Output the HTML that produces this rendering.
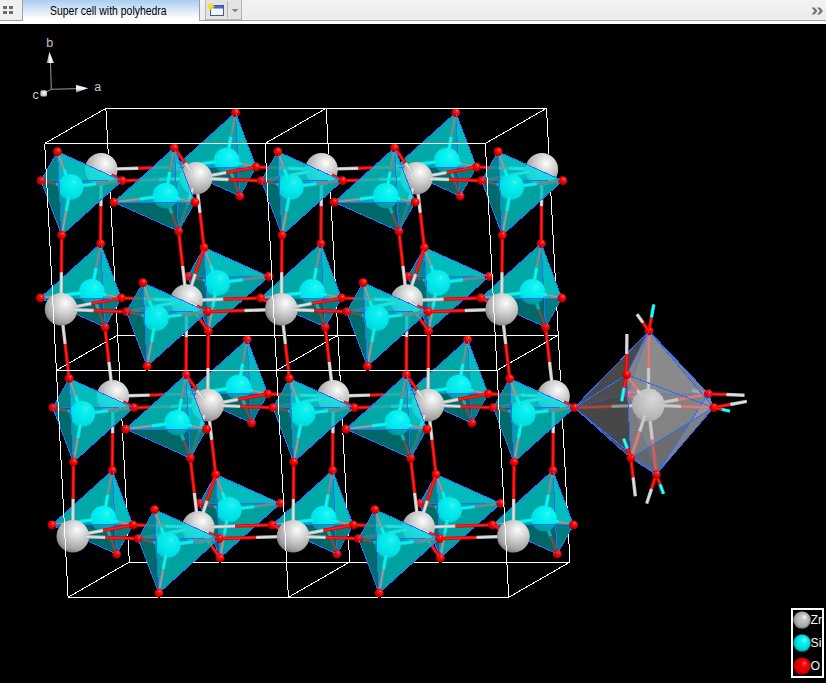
<!DOCTYPE html>
<html><head><meta charset="utf-8"><title>Super cell with polyhedra</title>
<style>
html,body{margin:0;padding:0;background:#000;overflow:hidden}
body{width:826px;height:683px;position:relative;font-family:"Liberation Sans",sans-serif}
#bar{position:absolute;left:0;top:0;width:826px;height:24px;background:linear-gradient(#f3f3f3,#ececec 19px,#fff 21px)}
#bar .line{position:absolute;left:0;top:20px;width:826px;height:1px;background:#a0a0a0}
#bar .wl{position:absolute;left:0;top:21px;width:826px;height:3px;background:#fff}
#b1{position:absolute;left:0;top:0;width:22px;height:20px;background:#f0f0f0;border-right:1px solid #a0a0a0}
#b1 i{position:absolute;width:4px;height:3px;background:#6e6e6e}
#tab{position:absolute;left:23px;top:0;width:176px;height:24px;background:linear-gradient(#a9cdf0,#cfe3f7 8px,#fff 19px)}
#tab span{position:absolute;left:27px;top:4px;font-size:12px;color:#000;white-space:nowrap;transform:scaleX(0.87);transform-origin:0 0}
#tabr{position:absolute;left:199px;top:0;width:1px;height:20px;background:#a0a0a0}
#grp{position:absolute;left:205px;top:0;width:37px;height:20px;background:#e3e3e3;border:1px solid #b4b4b4;border-top:none;box-sizing:border-box}
#grp .sep{position:absolute;left:21px;top:1px;width:1px;height:17px;background:#b4b4b4}
#more{position:absolute;left:811px;top:4.5px}
#cv{position:absolute;left:0;top:24px;width:826px;height:659px;background:#000}
svg text{font-family:"Liberation Sans",sans-serif}
</style></head><body>
<div id="cv"></div>
<svg width="826" height="683" viewBox="0 0 826 683" style="position:absolute;left:0;top:0">
<defs>
<radialGradient id="gZ" cx="0.63" cy="0.31" r="0.74"><stop offset="0" stop-color="#fff"/><stop offset="0.1" stop-color="#f2f2f2"/><stop offset="0.45" stop-color="#cdcdcd"/><stop offset="0.8" stop-color="#a4a4a4"/><stop offset="1" stop-color="#7a7a7a"/></radialGradient>
<radialGradient id="gS" cx="0.63" cy="0.31" r="0.74"><stop offset="0" stop-color="#c8ffff"/><stop offset="0.12" stop-color="#40ffff"/><stop offset="0.45" stop-color="#00f4fa"/><stop offset="0.8" stop-color="#00d4dc"/><stop offset="1" stop-color="#00a8b0"/></radialGradient>
<radialGradient id="gO" cx="0.63" cy="0.31" r="0.74"><stop offset="0" stop-color="#ffb0b0"/><stop offset="0.15" stop-color="#ff2020"/><stop offset="0.5" stop-color="#f00000"/><stop offset="1" stop-color="#a00000"/></radialGradient>
<linearGradient id="gA" x1="0" x2="1" y1="0" y2="0"><stop offset="0" stop-color="#8c8c8c"/><stop offset="0.5" stop-color="#fff"/><stop offset="1" stop-color="#c8c8c8"/></linearGradient>
<linearGradient id="gB" x1="0" x2="0" y1="0" y2="1"><stop offset="0" stop-color="#c8c8c8"/><stop offset="0.45" stop-color="#fff"/><stop offset="1" stop-color="#8c8c8c"/></linearGradient>
<radialGradient id="gC" cx="0.5" cy="0.5" r="0.6" fx="0.6" fy="0.35"><stop offset="0" stop-color="#fff"/><stop offset="1" stop-color="#b0b0b0"/></radialGradient>
<radialGradient id="lZ" cx="0.5" cy="0.5" r="0.5" fx="0.68" fy="0.3"><stop offset="0" stop-color="#f6f6f6"/><stop offset="0.35" stop-color="#c6c6c6"/><stop offset="0.8" stop-color="#a8a8a8"/><stop offset="1" stop-color="#707070"/></radialGradient>
<radialGradient id="lS" cx="0.5" cy="0.5" r="0.5" fx="0.68" fy="0.3"><stop offset="0" stop-color="#a0ffff"/><stop offset="0.35" stop-color="#00f4f4"/><stop offset="0.8" stop-color="#00d8d8"/><stop offset="1" stop-color="#009090"/></radialGradient>
<radialGradient id="lO" cx="0.5" cy="0.5" r="0.5" fx="0.68" fy="0.3"><stop offset="0" stop-color="#ff6060"/><stop offset="0.35" stop-color="#f40000"/><stop offset="0.8" stop-color="#d80000"/><stop offset="1" stop-color="#8c0000"/></radialGradient>
<clipPath id="cp"><rect x="0" y="24" width="826" height="659"/></clipPath>
</defs>
<g clip-path="url(#cp)" stroke-width="3.4" stroke-linecap="butt" fill="none">
<polygon points="251.5,422.9 247.2,339.5 186.8,393.9" fill="rgb(0,112,112)" fill-opacity="0.6"/>
<polygon points="251.5,422.9 247.2,339.5 267.8,393.9" fill="rgb(0,202,202)" fill-opacity="0.6"/>
<path d="M238.3 387.5L244.9 405.2" stroke="#00e6ee"/><path d="M238.3 387.5L244.9 405.2" stroke="#30ffff" stroke-width="1.5"/>
<path d="M244.9 405.2L251.5 422.9" stroke="#e80000" stroke-width="3.0"/><path d="M244.9 405.2L251.5 422.9" stroke="#ff2020" stroke-width="1.1"/>
<path d="M238.3 387.5L242.7 363.5" stroke="#00e6ee"/><path d="M238.3 387.5L242.7 363.5" stroke="#30ffff" stroke-width="1.5"/>
<path d="M242.7 363.5L247.2 339.5" stroke="#e80000" stroke-width="3.0"/><path d="M242.7 363.5L247.2 339.5" stroke="#ff2020" stroke-width="1.1"/>
<circle cx="238.3" cy="387.5" r="12.8" fill="url(#gS)"/>
<path d="M227.6 388.8L212.6 390.7" stroke="#00e6ee"/><path d="M227.6 388.8L212.6 390.7" stroke="#30ffff" stroke-width="1.5"/>
<path d="M244.5 388.8L253.1 390.7" stroke="#00e6ee"/><path d="M244.5 388.8L253.1 390.7" stroke="#30ffff" stroke-width="1.5"/>
<polygon points="247.2,339.5 267.8,393.9 186.8,393.9" fill="rgb(0,237,237)" fill-opacity="0.6"/>
<polygon points="251.5,422.9 267.8,393.9 186.8,393.9" fill="rgb(0,130,130)" fill-opacity="0.6"/>
<path d="M212.6 390.7L186.8 393.9" stroke="#8e8888" stroke-width="2.8"/><path d="M212.6 390.7L186.8 393.9" stroke="#7cb0b0" stroke-width="1.1"/>
<path d="M253.1 390.7L267.8 393.9" stroke="#8e8888" stroke-width="2.8"/><path d="M253.1 390.7L267.8 393.9" stroke="#7cb0b0" stroke-width="1.1"/>
<circle cx="251.5" cy="422.9" r="4.4" fill="url(#gO)"/>
<circle cx="247.2" cy="339.5" r="4.4" fill="url(#gO)"/>
<circle cx="112.9" cy="396.3" r="16.3" fill="url(#gZ)"/>
<path d="M112.8 411.3L112.6 433.4" stroke="#bdbdbd"/><path d="M112.8 411.3L112.6 433.4" stroke="#e4e4e4" stroke-width="1.5"/>
<path d="M112.6 433.4L112.3 470.5" stroke="#e80000"/><path d="M112.6 433.4L112.3 470.5" stroke="#ff2020" stroke-width="1.5"/>
<path d="M127.8 395.8L149.8 395.1" stroke="#bdbdbd"/><path d="M127.8 395.8L149.8 395.1" stroke="#e4e4e4" stroke-width="1.5"/>
<path d="M149.8 395.1L186.8 393.9" stroke="#e80000"/><path d="M149.8 395.1L186.8 393.9" stroke="#ff2020" stroke-width="1.5"/>
<path d="M111.3 382.3L108.9 361.7" stroke="#bdbdbd"/><path d="M111.3 382.3L108.9 361.7" stroke="#e4e4e4" stroke-width="1.5"/>
<circle cx="186.8" cy="393.9" r="4.4" fill="url(#gO)"/>
<polygon points="220,557.8 280.4,503.4 199.4,503.4" fill="rgb(0,103,103)" fill-opacity="0.6"/>
<polygon points="215.7,474.4 280.4,503.4 199.4,503.4" fill="rgb(0,211,211)" fill-opacity="0.6"/>
<path d="M228.9 509.8L254.6 506.6" stroke="#00e6ee"/><path d="M228.9 509.8L254.6 506.6" stroke="#30ffff" stroke-width="1.5"/>
<path d="M254.6 506.6L280.4 503.4" stroke="#e80000" stroke-width="3.0"/><path d="M254.6 506.6L280.4 503.4" stroke="#ff2020" stroke-width="1.1"/>
<path d="M228.9 509.8L214.1 506.6" stroke="#00e6ee"/><path d="M228.9 509.8L214.1 506.6" stroke="#30ffff" stroke-width="1.5"/>
<path d="M214.1 506.6L199.4 503.4" stroke="#e80000" stroke-width="3.0"/><path d="M214.1 506.6L199.4 503.4" stroke="#ff2020" stroke-width="1.1"/>
<circle cx="228.9" cy="509.8" r="12.8" fill="url(#gS)"/>
<path d="M227 519.8L224.5 533.8" stroke="#00e6ee"/><path d="M227 519.8L224.5 533.8" stroke="#30ffff" stroke-width="1.5"/>
<path d="M226.1 502.4L222.3 492.1" stroke="#00e6ee"/><path d="M226.1 502.4L222.3 492.1" stroke="#30ffff" stroke-width="1.5"/>
<polygon points="215.7,474.4 220,557.8 199.4,503.4" fill="rgb(0,139,139)" fill-opacity="0.6"/>
<polygon points="215.7,474.4 220,557.8 280.4,503.4" fill="rgb(0,229,229)" fill-opacity="0.6"/>
<path d="M224.5 533.8L220 557.8" stroke="#8e8888" stroke-width="2.8"/><path d="M224.5 533.8L220 557.8" stroke="#7cb0b0" stroke-width="1.1"/>
<path d="M222.3 492.1L215.7 474.4" stroke="#8e8888" stroke-width="2.8"/><path d="M222.3 492.1L215.7 474.4" stroke="#7cb0b0" stroke-width="1.1"/>
<circle cx="199.4" cy="503.4" r="4.4" fill="url(#gO)"/>
<circle cx="280.4" cy="503.4" r="4.4" fill="url(#gO)"/>
<path d="M108.9 361.7L104.9 327.1" stroke="#e80000"/><path d="M108.9 361.7L104.9 327.1" stroke="#ff2020" stroke-width="1.5"/>
<polygon points="239.8,196 235.5,112.6 175.1,167" fill="rgb(0,112,112)" fill-opacity="0.6"/>
<polygon points="239.8,196 235.5,112.6 256.1,167" fill="rgb(0,202,202)" fill-opacity="0.6"/>
<path d="M226.6 160.6L233.2 178.3" stroke="#00e6ee"/><path d="M226.6 160.6L233.2 178.3" stroke="#30ffff" stroke-width="1.5"/>
<path d="M233.2 178.3L239.8 196" stroke="#e80000" stroke-width="3.0"/><path d="M233.2 178.3L239.8 196" stroke="#ff2020" stroke-width="1.1"/>
<path d="M226.6 160.6L231 136.6" stroke="#00e6ee"/><path d="M226.6 160.6L231 136.6" stroke="#30ffff" stroke-width="1.5"/>
<path d="M231 136.6L235.5 112.6" stroke="#e80000" stroke-width="3.0"/><path d="M231 136.6L235.5 112.6" stroke="#ff2020" stroke-width="1.1"/>
<circle cx="226.6" cy="160.6" r="12.8" fill="url(#gS)"/>
<path d="M215.9 161.9L200.9 163.8" stroke="#00e6ee"/><path d="M215.9 161.9L200.9 163.8" stroke="#30ffff" stroke-width="1.5"/>
<path d="M232.8 161.9L241.4 163.8" stroke="#00e6ee"/><path d="M232.8 161.9L241.4 163.8" stroke="#30ffff" stroke-width="1.5"/>
<polygon points="235.5,112.6 256.1,167 175.1,167" fill="rgb(0,237,237)" fill-opacity="0.6"/>
<polygon points="239.8,196 256.1,167 175.1,167" fill="rgb(0,130,130)" fill-opacity="0.6"/>
<path d="M200.9 163.8L175.1 167" stroke="#8e8888" stroke-width="2.8"/><path d="M200.9 163.8L175.1 167" stroke="#7cb0b0" stroke-width="1.1"/>
<path d="M241.4 163.8L256.1 167" stroke="#8e8888" stroke-width="2.8"/><path d="M241.4 163.8L256.1 167" stroke="#7cb0b0" stroke-width="1.1"/>
<circle cx="239.8" cy="196" r="4.4" fill="url(#gO)"/>
<circle cx="235.5" cy="112.6" r="4.4" fill="url(#gO)"/>
<path d="M116.9 398.5L123.3 402" stroke="#bdbdbd"/><path d="M116.9 398.5L123.3 402" stroke="#e4e4e4" stroke-width="1.5"/>
<path d="M197.3 399.5L187.9 394.4" stroke="#e80000"/><path d="M197.3 399.5L187.9 394.4" stroke="#ff2020" stroke-width="1.5"/>
<polygon points="116.6,554 112.3,470.5 51.9,524.9" fill="rgb(0,112,112)" fill-opacity="0.6"/>
<polygon points="116.6,554 112.3,470.5 132.9,524.9" fill="rgb(0,202,202)" fill-opacity="0.6"/>
<path d="M103.4 518.6L110 536.3" stroke="#00e6ee"/><path d="M103.4 518.6L110 536.3" stroke="#30ffff" stroke-width="1.5"/>
<path d="M110 536.3L116.6 554" stroke="#e80000" stroke-width="3.0"/><path d="M110 536.3L116.6 554" stroke="#ff2020" stroke-width="1.1"/>
<path d="M103.4 518.6L107.8 494.5" stroke="#00e6ee"/><path d="M103.4 518.6L107.8 494.5" stroke="#30ffff" stroke-width="1.5"/>
<path d="M107.8 494.5L112.3 470.5" stroke="#e80000" stroke-width="3.0"/><path d="M107.8 494.5L112.3 470.5" stroke="#ff2020" stroke-width="1.1"/>
<circle cx="103.4" cy="518.6" r="12.8" fill="url(#gS)"/>
<path d="M92.7 519.9L77.7 521.7" stroke="#00e6ee"/><path d="M92.7 519.9L77.7 521.7" stroke="#30ffff" stroke-width="1.5"/>
<path d="M109.6 519.9L118.2 521.7" stroke="#00e6ee"/><path d="M109.6 519.9L118.2 521.7" stroke="#30ffff" stroke-width="1.5"/>
<polygon points="112.3,470.5 132.9,524.9 51.9,524.9" fill="rgb(0,237,237)" fill-opacity="0.6"/>
<polygon points="116.6,554 132.9,524.9 51.9,524.9" fill="rgb(0,130,130)" fill-opacity="0.6"/>
<path d="M77.7 521.7L51.9 524.9" stroke="#8e8888" stroke-width="2.8"/><path d="M77.7 521.7L51.9 524.9" stroke="#7cb0b0" stroke-width="1.1"/>
<path d="M118.2 521.7L132.9 524.9" stroke="#8e8888" stroke-width="2.8"/><path d="M118.2 521.7L132.9 524.9" stroke="#7cb0b0" stroke-width="1.1"/>
<circle cx="116.6" cy="554" r="4.4" fill="url(#gO)"/>
<circle cx="112.3" cy="470.5" r="4.4" fill="url(#gO)"/>
<circle cx="101.2" cy="169.4" r="16.3" fill="url(#gZ)"/>
<path d="M101.1 184.4L100.9 206.5" stroke="#bdbdbd"/><path d="M101.1 184.4L100.9 206.5" stroke="#e4e4e4" stroke-width="1.5"/>
<circle cx="267.8" cy="393.9" r="4.4" fill="url(#gO)"/>
<path d="M100.9 206.5L100.6 243.6" stroke="#e80000"/><path d="M100.9 206.5L100.6 243.6" stroke="#ff2020" stroke-width="1.5"/>
<path d="M116.1 168.9L138.1 168.2" stroke="#bdbdbd"/><path d="M116.1 168.9L138.1 168.2" stroke="#e4e4e4" stroke-width="1.5"/>
<path d="M138.1 168.2L175.1 167" stroke="#e80000"/><path d="M138.1 168.2L175.1 167" stroke="#ff2020" stroke-width="1.5"/>
<path d="M300.5 395.1L271.4 394" stroke="#e80000"/><path d="M300.5 395.1L271.4 394" stroke="#ff2020" stroke-width="1.5"/>
<path d="M237.8 399.5L264.8 394.4" stroke="#e80000"/><path d="M237.8 399.5L264.8 394.4" stroke="#ff2020" stroke-width="1.5"/>
<circle cx="220" cy="557.8" r="4.4" fill="url(#gO)"/>
<circle cx="175.1" cy="167" r="4.4" fill="url(#gO)"/>
<polygon points="208.3,330.9 268.7,276.5 187.7,276.5" fill="rgb(0,103,103)" fill-opacity="0.6"/>
<polygon points="204,247.5 268.7,276.5 187.7,276.5" fill="rgb(0,211,211)" fill-opacity="0.6"/>
<path d="M217.2 282.9L242.9 279.7" stroke="#00e6ee"/><path d="M217.2 282.9L242.9 279.7" stroke="#30ffff" stroke-width="1.5"/>
<path d="M242.9 279.7L268.7 276.5" stroke="#e80000" stroke-width="3.0"/><path d="M242.9 279.7L268.7 276.5" stroke="#ff2020" stroke-width="1.1"/>
<path d="M217.2 282.9L202.4 279.7" stroke="#00e6ee"/><path d="M217.2 282.9L202.4 279.7" stroke="#30ffff" stroke-width="1.5"/>
<path d="M202.4 279.7L187.7 276.5" stroke="#e80000" stroke-width="3.0"/><path d="M202.4 279.7L187.7 276.5" stroke="#ff2020" stroke-width="1.1"/>
<circle cx="217.2" cy="282.9" r="12.8" fill="url(#gS)"/>
<path d="M215.3 292.9L212.8 306.9" stroke="#00e6ee"/><path d="M215.3 292.9L212.8 306.9" stroke="#30ffff" stroke-width="1.5"/>
<path d="M214.4 275.5L210.6 265.2" stroke="#00e6ee"/><path d="M214.4 275.5L210.6 265.2" stroke="#30ffff" stroke-width="1.5"/>
<polygon points="204,247.5 208.3,330.9 187.7,276.5" fill="rgb(0,139,139)" fill-opacity="0.6"/>
<polygon points="204,247.5 208.3,330.9 268.7,276.5" fill="rgb(0,229,229)" fill-opacity="0.6"/>
<path d="M212.8 306.9L208.3 330.9" stroke="#8e8888" stroke-width="2.8"/><path d="M212.8 306.9L208.3 330.9" stroke="#7cb0b0" stroke-width="1.1"/>
<path d="M210.6 265.2L204 247.5" stroke="#8e8888" stroke-width="2.8"/><path d="M210.6 265.2L204 247.5" stroke="#7cb0b0" stroke-width="1.1"/>
<circle cx="187.7" cy="276.5" r="4.4" fill="url(#gO)"/>
<circle cx="268.7" cy="276.5" r="4.4" fill="url(#gO)"/>
<polygon points="471.8,422.9 467.5,339.5 407.1,393.9" fill="rgb(0,112,112)" fill-opacity="0.6"/>
<polygon points="471.8,422.9 467.5,339.5 488.1,393.9" fill="rgb(0,202,202)" fill-opacity="0.6"/>
<path d="M458.6 387.5L465.2 405.2" stroke="#00e6ee"/><path d="M458.6 387.5L465.2 405.2" stroke="#30ffff" stroke-width="1.5"/>
<path d="M465.2 405.2L471.8 422.9" stroke="#e80000" stroke-width="3.0"/><path d="M465.2 405.2L471.8 422.9" stroke="#ff2020" stroke-width="1.1"/>
<path d="M458.6 387.5L463 363.5" stroke="#00e6ee"/><path d="M458.6 387.5L463 363.5" stroke="#30ffff" stroke-width="1.5"/>
<path d="M463 363.5L467.5 339.5" stroke="#e80000" stroke-width="3.0"/><path d="M463 363.5L467.5 339.5" stroke="#ff2020" stroke-width="1.1"/>
<circle cx="458.6" cy="387.5" r="12.8" fill="url(#gS)"/>
<path d="M447.9 388.8L432.9 390.7" stroke="#00e6ee"/><path d="M447.9 388.8L432.9 390.7" stroke="#30ffff" stroke-width="1.5"/>
<path d="M464.8 388.8L473.4 390.7" stroke="#00e6ee"/><path d="M464.8 388.8L473.4 390.7" stroke="#30ffff" stroke-width="1.5"/>
<polygon points="467.5,339.5 488.1,393.9 407.1,393.9" fill="rgb(0,237,237)" fill-opacity="0.6"/>
<polygon points="471.8,422.9 488.1,393.9 407.1,393.9" fill="rgb(0,130,130)" fill-opacity="0.6"/>
<path d="M432.9 390.7L407.1 393.9" stroke="#8e8888" stroke-width="2.8"/><path d="M432.9 390.7L407.1 393.9" stroke="#7cb0b0" stroke-width="1.1"/>
<path d="M473.4 390.7L488.1 393.9" stroke="#8e8888" stroke-width="2.8"/><path d="M473.4 390.7L488.1 393.9" stroke="#7cb0b0" stroke-width="1.1"/>
<circle cx="471.8" cy="422.9" r="4.4" fill="url(#gO)"/>
<circle cx="467.5" cy="339.5" r="4.4" fill="url(#gO)"/>
<path d="M123.3 402L133.8 407.6" stroke="#e80000"/><path d="M123.3 402L133.8 407.6" stroke="#ff2020" stroke-width="1.5"/>
<circle cx="51.9" cy="524.9" r="4.4" fill="url(#gO)"/>
<path d="M333.2 396.3L300.5 395.1" stroke="#bdbdbd"/><path d="M333.2 396.3L300.5 395.1" stroke="#e4e4e4" stroke-width="1.5"/>
<circle cx="215.7" cy="474.4" r="4.4" fill="url(#gO)"/>
<path d="M209.2 542.6L218.9 556.3" stroke="#e80000"/><path d="M209.2 542.6L218.9 556.3" stroke="#ff2020" stroke-width="1.5"/>
<path d="M105.2 171.6L111.6 175.1" stroke="#bdbdbd"/><path d="M105.2 171.6L111.6 175.1" stroke="#e4e4e4" stroke-width="1.5"/>
<path d="M207.7 405.1L197.3 399.5" stroke="#bdbdbd"/><path d="M207.7 405.1L197.3 399.5" stroke="#e4e4e4" stroke-width="1.5"/>
<path d="M211.7 439.7L215.3 470.6" stroke="#e80000"/><path d="M211.7 439.7L215.3 470.6" stroke="#ff2020" stroke-width="1.5"/>
<path d="M185.6 172.6L176.2 167.5" stroke="#e80000"/><path d="M185.6 172.6L176.2 167.5" stroke="#ff2020" stroke-width="1.5"/>
<polygon points="104.9,327.1 100.6,243.6 40.2,298" fill="rgb(0,112,112)" fill-opacity="0.6"/>
<polygon points="104.9,327.1 100.6,243.6 121.2,298" fill="rgb(0,202,202)" fill-opacity="0.6"/>
<path d="M91.7 291.7L98.3 309.4" stroke="#00e6ee"/><path d="M91.7 291.7L98.3 309.4" stroke="#30ffff" stroke-width="1.5"/>
<path d="M98.3 309.4L104.9 327.1" stroke="#e80000" stroke-width="3.0"/><path d="M98.3 309.4L104.9 327.1" stroke="#ff2020" stroke-width="1.1"/>
<path d="M91.7 291.7L96.1 267.6" stroke="#00e6ee"/><path d="M91.7 291.7L96.1 267.6" stroke="#30ffff" stroke-width="1.5"/>
<path d="M96.1 267.6L100.6 243.6" stroke="#e80000" stroke-width="3.0"/><path d="M96.1 267.6L100.6 243.6" stroke="#ff2020" stroke-width="1.1"/>
<circle cx="91.7" cy="291.7" r="12.8" fill="url(#gS)"/>
<path d="M81 293L66 294.8" stroke="#00e6ee"/><path d="M81 293L66 294.8" stroke="#30ffff" stroke-width="1.5"/>
<path d="M97.9 293L106.5 294.8" stroke="#00e6ee"/><path d="M97.9 293L106.5 294.8" stroke="#30ffff" stroke-width="1.5"/>
<polygon points="100.6,243.6 121.2,298 40.2,298" fill="rgb(0,237,237)" fill-opacity="0.6"/>
<polygon points="104.9,327.1 121.2,298 40.2,298" fill="rgb(0,130,130)" fill-opacity="0.6"/>
<path d="M66 294.8L40.2 298" stroke="#8e8888" stroke-width="2.8"/><path d="M66 294.8L40.2 298" stroke="#7cb0b0" stroke-width="1.1"/>
<path d="M106.5 294.8L121.2 298" stroke="#8e8888" stroke-width="2.8"/><path d="M106.5 294.8L121.2 298" stroke="#7cb0b0" stroke-width="1.1"/>
<circle cx="104.9" cy="327.1" r="4.4" fill="url(#gO)"/>
<circle cx="100.6" cy="243.6" r="4.4" fill="url(#gO)"/>
<circle cx="333.2" cy="396.3" r="16.3" fill="url(#gZ)"/>
<path d="M333.1 411.3L332.9 433.4" stroke="#bdbdbd"/><path d="M333.1 411.3L332.9 433.4" stroke="#e4e4e4" stroke-width="1.5"/>
<path d="M332.9 433.4L332.6 470.5" stroke="#e80000"/><path d="M332.9 433.4L332.6 470.5" stroke="#ff2020" stroke-width="1.5"/>
<path d="M207.7 405.1L237.8 399.5" stroke="#bdbdbd"/><path d="M207.7 405.1L237.8 399.5" stroke="#e4e4e4" stroke-width="1.5"/>
<path d="M348.1 395.8L370.1 395.1" stroke="#bdbdbd"/><path d="M348.1 395.8L370.1 395.1" stroke="#e4e4e4" stroke-width="1.5"/>
<path d="M207 500.9L214.8 477.1" stroke="#e80000"/><path d="M207 500.9L214.8 477.1" stroke="#ff2020" stroke-width="1.5"/>
<path d="M370.1 395.1L407.1 393.9" stroke="#e80000"/><path d="M370.1 395.1L407.1 393.9" stroke="#ff2020" stroke-width="1.5"/>
<circle cx="256.1" cy="167" r="4.4" fill="url(#gO)"/>
<path d="M207.7 405.1L211.7 439.7" stroke="#bdbdbd"/><path d="M207.7 405.1L211.7 439.7" stroke="#e4e4e4" stroke-width="1.5"/>
<path d="M170.8 406.4L137.8 407.5" stroke="#e80000"/><path d="M170.8 406.4L137.8 407.5" stroke="#ff2020" stroke-width="1.5"/>
<path d="M331.6 382.3L329.2 361.7" stroke="#bdbdbd"/><path d="M331.6 382.3L329.2 361.7" stroke="#e4e4e4" stroke-width="1.5"/>
<path d="M288.8 168.2L259.7 167.1" stroke="#e80000"/><path d="M288.8 168.2L259.7 167.1" stroke="#ff2020" stroke-width="1.5"/>
<path d="M207.7 405.1L170.8 406.4" stroke="#bdbdbd"/><path d="M207.7 405.1L170.8 406.4" stroke="#e4e4e4" stroke-width="1.5"/>
<circle cx="407.1" cy="393.9" r="4.4" fill="url(#gO)"/>
<path d="M208 368L208.3 335" stroke="#e80000"/><path d="M208 368L208.3 335" stroke="#ff2020" stroke-width="1.5"/>
<circle cx="132.9" cy="524.9" r="4.4" fill="url(#gO)"/>
<path d="M207.7 405.1L208 368" stroke="#bdbdbd"/><path d="M207.7 405.1L208 368" stroke="#e4e4e4" stroke-width="1.5"/>
<circle cx="207.7" cy="405.1" r="16.3" fill="url(#gZ)"/>
<polygon points="440.3,557.8 500.7,503.4 419.7,503.4" fill="rgb(0,103,103)" fill-opacity="0.6"/>
<polygon points="436,474.4 500.7,503.4 419.7,503.4" fill="rgb(0,211,211)" fill-opacity="0.6"/>
<path d="M226.1 172.6L253.1 167.5" stroke="#e80000"/><path d="M226.1 172.6L253.1 167.5" stroke="#ff2020" stroke-width="1.5"/>
<path d="M449.2 509.8L474.9 506.6" stroke="#00e6ee"/><path d="M449.2 509.8L474.9 506.6" stroke="#30ffff" stroke-width="1.5"/>
<path d="M474.9 506.6L500.7 503.4" stroke="#e80000" stroke-width="3.0"/><path d="M474.9 506.6L500.7 503.4" stroke="#ff2020" stroke-width="1.1"/>
<path d="M449.2 509.8L434.4 506.6" stroke="#00e6ee"/><path d="M449.2 509.8L434.4 506.6" stroke="#30ffff" stroke-width="1.5"/>
<path d="M434.4 506.6L419.7 503.4" stroke="#e80000" stroke-width="3.0"/><path d="M434.4 506.6L419.7 503.4" stroke="#ff2020" stroke-width="1.1"/>
<circle cx="449.2" cy="509.8" r="12.8" fill="url(#gS)"/>
<path d="M447.3 519.8L444.8 533.8" stroke="#00e6ee"/><path d="M447.3 519.8L444.8 533.8" stroke="#30ffff" stroke-width="1.5"/>
<path d="M446.4 502.4L442.6 492.1" stroke="#00e6ee"/><path d="M446.4 502.4L442.6 492.1" stroke="#30ffff" stroke-width="1.5"/>
<polygon points="436,474.4 440.3,557.8 419.7,503.4" fill="rgb(0,139,139)" fill-opacity="0.6"/>
<polygon points="436,474.4 440.3,557.8 500.7,503.4" fill="rgb(0,229,229)" fill-opacity="0.6"/>
<path d="M444.8 533.8L440.3 557.8" stroke="#8e8888" stroke-width="2.8"/><path d="M444.8 533.8L440.3 557.8" stroke="#7cb0b0" stroke-width="1.1"/>
<path d="M442.6 492.1L436 474.4" stroke="#8e8888" stroke-width="2.8"/><path d="M442.6 492.1L436 474.4" stroke="#7cb0b0" stroke-width="1.1"/>
<circle cx="208.3" cy="330.9" r="4.4" fill="url(#gO)"/>
<circle cx="419.7" cy="503.4" r="4.4" fill="url(#gO)"/>
<circle cx="500.7" cy="503.4" r="4.4" fill="url(#gO)"/>
<path d="M321.7 398.5L303.1 402" stroke="#bdbdbd"/><path d="M321.7 398.5L303.1 402" stroke="#e4e4e4" stroke-width="1.5"/>
<path d="M165.6 526.1L136.5 525" stroke="#e80000"/><path d="M165.6 526.1L136.5 525" stroke="#ff2020" stroke-width="1.5"/>
<path d="M329.2 361.7L325.2 327.1" stroke="#e80000"/><path d="M329.2 361.7L325.2 327.1" stroke="#ff2020" stroke-width="1.5"/>
<path d="M102.9 530.5L129.9 525.5" stroke="#e80000"/><path d="M102.9 530.5L129.9 525.5" stroke="#ff2020" stroke-width="1.5"/>
<polygon points="460.1,196 455.8,112.6 395.4,167" fill="rgb(0,112,112)" fill-opacity="0.6"/>
<polygon points="460.1,196 455.8,112.6 476.4,167" fill="rgb(0,202,202)" fill-opacity="0.6"/>
<path d="M446.9 160.6L453.5 178.3" stroke="#00e6ee"/><path d="M446.9 160.6L453.5 178.3" stroke="#30ffff" stroke-width="1.5"/>
<path d="M453.5 178.3L460.1 196" stroke="#e80000" stroke-width="3.0"/><path d="M453.5 178.3L460.1 196" stroke="#ff2020" stroke-width="1.1"/>
<path d="M446.9 160.6L451.3 136.6" stroke="#00e6ee"/><path d="M446.9 160.6L451.3 136.6" stroke="#30ffff" stroke-width="1.5"/>
<path d="M451.3 136.6L455.8 112.6" stroke="#e80000" stroke-width="3.0"/><path d="M451.3 136.6L455.8 112.6" stroke="#ff2020" stroke-width="1.1"/>
<circle cx="446.9" cy="160.6" r="12.8" fill="url(#gS)"/>
<path d="M436.2 161.9L421.2 163.8" stroke="#00e6ee"/><path d="M436.2 161.9L421.2 163.8" stroke="#30ffff" stroke-width="1.5"/>
<path d="M453.1 161.9L461.7 163.8" stroke="#00e6ee"/><path d="M453.1 161.9L461.7 163.8" stroke="#30ffff" stroke-width="1.5"/>
<polygon points="455.8,112.6 476.4,167 395.4,167" fill="rgb(0,237,237)" fill-opacity="0.6"/>
<polygon points="460.1,196 476.4,167 395.4,167" fill="rgb(0,130,130)" fill-opacity="0.6"/>
<path d="M421.2 163.8L395.4 167" stroke="#8e8888" stroke-width="2.8"/><path d="M421.2 163.8L395.4 167" stroke="#7cb0b0" stroke-width="1.1"/>
<path d="M461.7 163.8L476.4 167" stroke="#8e8888" stroke-width="2.8"/><path d="M461.7 163.8L476.4 167" stroke="#7cb0b0" stroke-width="1.1"/>
<circle cx="460.1" cy="196" r="4.4" fill="url(#gO)"/>
<circle cx="455.8" cy="112.6" r="4.4" fill="url(#gO)"/>
<path d="M111.6 175.1L122.1 180.7" stroke="#e80000"/><path d="M111.6 175.1L122.1 180.7" stroke="#ff2020" stroke-width="1.5"/>
<circle cx="40.2" cy="298" r="4.4" fill="url(#gO)"/>
<path d="M337.2 398.5L343.6 402" stroke="#bdbdbd"/><path d="M337.2 398.5L343.6 402" stroke="#e4e4e4" stroke-width="1.5"/>
<path d="M220.9 405.6L240.4 406.4" stroke="#bdbdbd"/><path d="M220.9 405.6L240.4 406.4" stroke="#e4e4e4" stroke-width="1.5"/>
<path d="M198.3 527.4L209.2 542.6" stroke="#bdbdbd"/><path d="M198.3 527.4L209.2 542.6" stroke="#e4e4e4" stroke-width="1.5"/>
<polygon points="73.4,462 133.8,407.6 52.8,407.6" fill="rgb(0,103,103)" fill-opacity="0.6"/>
<polygon points="69.1,378.5 133.8,407.6 52.8,407.6" fill="rgb(0,211,211)" fill-opacity="0.6"/>
<path d="M82.3 413.9L108 410.8" stroke="#00e6ee"/><path d="M82.3 413.9L108 410.8" stroke="#30ffff" stroke-width="1.5"/>
<path d="M108 410.8L133.8 407.6" stroke="#e80000" stroke-width="3.0"/><path d="M108 410.8L133.8 407.6" stroke="#ff2020" stroke-width="1.1"/>
<path d="M82.3 413.9L67.5 410.8" stroke="#00e6ee"/><path d="M82.3 413.9L67.5 410.8" stroke="#30ffff" stroke-width="1.5"/>
<path d="M67.5 410.8L52.8 407.6" stroke="#e80000" stroke-width="3.0"/><path d="M67.5 410.8L52.8 407.6" stroke="#ff2020" stroke-width="1.1"/>
<circle cx="82.3" cy="413.9" r="12.8" fill="url(#gS)"/>
<path d="M321.5 169.4L288.8 168.2" stroke="#bdbdbd"/><path d="M321.5 169.4L288.8 168.2" stroke="#e4e4e4" stroke-width="1.5"/>
<path d="M80.4 424L77.9 438" stroke="#00e6ee"/><path d="M80.4 424L77.9 438" stroke="#30ffff" stroke-width="1.5"/>
<path d="M79.5 406.5L75.7 396.2" stroke="#00e6ee"/><path d="M79.5 406.5L75.7 396.2" stroke="#30ffff" stroke-width="1.5"/>
<path d="M417.6 399.5L408.2 394.4" stroke="#e80000"/><path d="M417.6 399.5L408.2 394.4" stroke="#ff2020" stroke-width="1.5"/>
<polygon points="69.1,378.5 73.4,462 52.8,407.6" fill="rgb(0,139,139)" fill-opacity="0.6"/>
<polygon points="69.1,378.5 73.4,462 133.8,407.6" fill="rgb(0,229,229)" fill-opacity="0.6"/>
<path d="M77.9 438L73.4 462" stroke="#8e8888" stroke-width="2.8"/><path d="M77.9 438L73.4 462" stroke="#7cb0b0" stroke-width="1.1"/>
<path d="M75.7 396.2L69.1 378.5" stroke="#8e8888" stroke-width="2.8"/><path d="M75.7 396.2L69.1 378.5" stroke="#7cb0b0" stroke-width="1.1"/>
<circle cx="52.8" cy="407.6" r="4.4" fill="url(#gO)"/>
<circle cx="133.8" cy="407.6" r="4.4" fill="url(#gO)"/>
<polygon points="336.9,554 332.6,470.5 272.2,524.9" fill="rgb(0,112,112)" fill-opacity="0.6"/>
<polygon points="336.9,554 332.6,470.5 353.2,524.9" fill="rgb(0,202,202)" fill-opacity="0.6"/>
<path d="M323.7 518.6L330.3 536.3" stroke="#00e6ee"/><path d="M323.7 518.6L330.3 536.3" stroke="#30ffff" stroke-width="1.5"/>
<path d="M330.3 536.3L336.9 554" stroke="#e80000" stroke-width="3.0"/><path d="M330.3 536.3L336.9 554" stroke="#ff2020" stroke-width="1.1"/>
<path d="M323.7 518.6L328.1 494.5" stroke="#00e6ee"/><path d="M323.7 518.6L328.1 494.5" stroke="#30ffff" stroke-width="1.5"/>
<path d="M328.1 494.5L332.6 470.5" stroke="#e80000" stroke-width="3.0"/><path d="M328.1 494.5L332.6 470.5" stroke="#ff2020" stroke-width="1.1"/>
<circle cx="323.7" cy="518.6" r="12.8" fill="url(#gS)"/>
<circle cx="204" cy="247.5" r="4.4" fill="url(#gO)"/>
<path d="M198.3 527.4L207 500.9" stroke="#bdbdbd"/><path d="M198.3 527.4L207 500.9" stroke="#e4e4e4" stroke-width="1.5"/>
<path d="M313 519.9L298 521.7" stroke="#00e6ee"/><path d="M313 519.9L298 521.7" stroke="#30ffff" stroke-width="1.5"/>
<path d="M329.9 519.9L338.5 521.7" stroke="#00e6ee"/><path d="M329.9 519.9L338.5 521.7" stroke="#30ffff" stroke-width="1.5"/>
<polygon points="332.6,470.5 353.2,524.9 272.2,524.9" fill="rgb(0,237,237)" fill-opacity="0.6"/>
<polygon points="336.9,554 353.2,524.9 272.2,524.9" fill="rgb(0,130,130)" fill-opacity="0.6"/>
<path d="M298 521.7L272.2 524.9" stroke="#8e8888" stroke-width="2.8"/><path d="M298 521.7L272.2 524.9" stroke="#7cb0b0" stroke-width="1.1"/>
<path d="M338.5 521.7L353.2 524.9" stroke="#8e8888" stroke-width="2.8"/><path d="M338.5 521.7L353.2 524.9" stroke="#7cb0b0" stroke-width="1.1"/>
<circle cx="336.9" cy="554" r="4.4" fill="url(#gO)"/>
<circle cx="332.6" cy="470.5" r="4.4" fill="url(#gO)"/>
<path d="M197.5 315.7L207.2 329.4" stroke="#e80000"/><path d="M197.5 315.7L207.2 329.4" stroke="#ff2020" stroke-width="1.5"/>
<path d="M196 178.2L185.6 172.6" stroke="#bdbdbd"/><path d="M196 178.2L185.6 172.6" stroke="#e4e4e4" stroke-width="1.5"/>
<path d="M200 212.8L203.6 243.7" stroke="#e80000"/><path d="M200 212.8L203.6 243.7" stroke="#ff2020" stroke-width="1.5"/>
<path d="M204.4 415.2L199 431.6" stroke="#bdbdbd"/><path d="M204.4 415.2L199 431.6" stroke="#e4e4e4" stroke-width="1.5"/>
<path d="M198.3 527.4L165.6 526.1" stroke="#bdbdbd"/><path d="M198.3 527.4L165.6 526.1" stroke="#e4e4e4" stroke-width="1.5"/>
<circle cx="321.5" cy="169.4" r="16.3" fill="url(#gZ)"/>
<path d="M303.1 402L273.1 407.6" stroke="#e80000"/><path d="M303.1 402L273.1 407.6" stroke="#ff2020" stroke-width="1.5"/>
<path d="M321.4 184.4L321.2 206.5" stroke="#bdbdbd"/><path d="M321.4 184.4L321.2 206.5" stroke="#e4e4e4" stroke-width="1.5"/>
<circle cx="488.1" cy="393.9" r="4.4" fill="url(#gO)"/>
<path d="M203.6 399.3L196.8 389.9" stroke="#bdbdbd"/><path d="M203.6 399.3L196.8 389.9" stroke="#e4e4e4" stroke-width="1.5"/>
<path d="M321.2 206.5L320.9 243.6" stroke="#e80000"/><path d="M321.2 206.5L320.9 243.6" stroke="#ff2020" stroke-width="1.5"/>
<path d="M196 178.2L226.1 172.6" stroke="#bdbdbd"/><path d="M196 178.2L226.1 172.6" stroke="#e4e4e4" stroke-width="1.5"/>
<path d="M336.4 168.9L358.4 168.2" stroke="#bdbdbd"/><path d="M336.4 168.9L358.4 168.2" stroke="#e4e4e4" stroke-width="1.5"/>
<path d="M240.4 406.4L273.1 407.6" stroke="#e80000"/><path d="M240.4 406.4L273.1 407.6" stroke="#ff2020" stroke-width="1.5"/>
<path d="M195.3 274L203.1 250.2" stroke="#e80000"/><path d="M195.3 274L203.1 250.2" stroke="#ff2020" stroke-width="1.5"/>
<path d="M358.4 168.2L395.4 167" stroke="#e80000"/><path d="M358.4 168.2L395.4 167" stroke="#ff2020" stroke-width="1.5"/>
<path d="M520.8 395.1L491.7 394" stroke="#e80000"/><path d="M520.8 395.1L491.7 394" stroke="#ff2020" stroke-width="1.5"/>
<circle cx="198.3" cy="527.4" r="16.3" fill="url(#gZ)"/>
<path d="M196 178.2L200 212.8" stroke="#bdbdbd"/><path d="M196 178.2L200 212.8" stroke="#e4e4e4" stroke-width="1.5"/>
<path d="M159.1 179.5L126.1 180.6" stroke="#e80000"/><path d="M159.1 179.5L126.1 180.6" stroke="#ff2020" stroke-width="1.5"/>
<path d="M72.8 536.2L102.9 530.5" stroke="#bdbdbd"/><path d="M72.8 536.2L102.9 530.5" stroke="#e4e4e4" stroke-width="1.5"/>
<path d="M213.2 526.9L235.2 526.1" stroke="#bdbdbd"/><path d="M213.2 526.9L235.2 526.1" stroke="#e4e4e4" stroke-width="1.5"/>
<path d="M458.1 399.5L485.1 394.4" stroke="#e80000"/><path d="M458.1 399.5L485.1 394.4" stroke="#ff2020" stroke-width="1.5"/>
<circle cx="440.3" cy="557.8" r="4.4" fill="url(#gO)"/>
<path d="M196 178.2L159.1 179.5" stroke="#bdbdbd"/><path d="M196 178.2L159.1 179.5" stroke="#e4e4e4" stroke-width="1.5"/>
<circle cx="395.4" cy="167" r="4.4" fill="url(#gO)"/>
<path d="M235.2 526.1L272.2 524.9" stroke="#e80000"/><path d="M235.2 526.1L272.2 524.9" stroke="#ff2020" stroke-width="1.5"/>
<circle cx="121.2" cy="298" r="4.4" fill="url(#gO)"/>
<circle cx="196" cy="178.2" r="16.3" fill="url(#gZ)"/>
<polygon points="428.6,330.9 489,276.5 408,276.5" fill="rgb(0,103,103)" fill-opacity="0.6"/>
<polygon points="424.3,247.5 489,276.5 408,276.5" fill="rgb(0,211,211)" fill-opacity="0.6"/>
<path d="M437.5 282.9L463.2 279.7" stroke="#00e6ee"/><path d="M437.5 282.9L463.2 279.7" stroke="#30ffff" stroke-width="1.5"/>
<path d="M463.2 279.7L489 276.5" stroke="#e80000" stroke-width="3.0"/><path d="M463.2 279.7L489 276.5" stroke="#ff2020" stroke-width="1.1"/>
<path d="M437.5 282.9L422.7 279.7" stroke="#00e6ee"/><path d="M437.5 282.9L422.7 279.7" stroke="#30ffff" stroke-width="1.5"/>
<path d="M422.7 279.7L408 276.5" stroke="#e80000" stroke-width="3.0"/><path d="M422.7 279.7L408 276.5" stroke="#ff2020" stroke-width="1.1"/>
<circle cx="437.5" cy="282.9" r="12.8" fill="url(#gS)"/>
<path d="M196.7 513.4L194.3 492.8" stroke="#bdbdbd"/><path d="M196.7 513.4L194.3 492.8" stroke="#e4e4e4" stroke-width="1.5"/>
<path d="M435.6 292.9L433.1 306.9" stroke="#00e6ee"/><path d="M435.6 292.9L433.1 306.9" stroke="#30ffff" stroke-width="1.5"/>
<path d="M434.7 275.5L430.9 265.2" stroke="#00e6ee"/><path d="M434.7 275.5L430.9 265.2" stroke="#30ffff" stroke-width="1.5"/>
<polygon points="424.3,247.5 428.6,330.9 408,276.5" fill="rgb(0,139,139)" fill-opacity="0.6"/>
<polygon points="424.3,247.5 428.6,330.9 489,276.5" fill="rgb(0,229,229)" fill-opacity="0.6"/>
<path d="M433.1 306.9L428.6 330.9" stroke="#8e8888" stroke-width="2.8"/><path d="M433.1 306.9L428.6 330.9" stroke="#7cb0b0" stroke-width="1.1"/>
<path d="M430.9 265.2L424.3 247.5" stroke="#8e8888" stroke-width="2.8"/><path d="M430.9 265.2L424.3 247.5" stroke="#7cb0b0" stroke-width="1.1"/>
<circle cx="408" cy="276.5" r="4.4" fill="url(#gO)"/>
<circle cx="489" cy="276.5" r="4.4" fill="url(#gO)"/>
<path d="M310 171.6L291.4 175.1" stroke="#bdbdbd"/><path d="M310 171.6L291.4 175.1" stroke="#e4e4e4" stroke-width="1.5"/>
<path d="M153.9 299.2L124.8 298.1" stroke="#e80000"/><path d="M153.9 299.2L124.8 298.1" stroke="#ff2020" stroke-width="1.5"/>
<path d="M199 431.6L190.3 458.1" stroke="#e80000"/><path d="M199 431.6L190.3 458.1" stroke="#ff2020" stroke-width="1.5"/>
<path d="M343.6 402L354.1 407.6" stroke="#e80000"/><path d="M343.6 402L354.1 407.6" stroke="#ff2020" stroke-width="1.5"/>
<circle cx="272.2" cy="524.9" r="4.4" fill="url(#gO)"/>
<path d="M73.1 499.1L73.4 466" stroke="#e80000"/><path d="M73.1 499.1L73.4 466" stroke="#ff2020" stroke-width="1.5"/>
<path d="M72.8 536.2L73.1 499.1" stroke="#bdbdbd"/><path d="M72.8 536.2L73.1 499.1" stroke="#e4e4e4" stroke-width="1.5"/>
<circle cx="72.8" cy="536.2" r="16.3" fill="url(#gZ)"/>
<path d="M91.2 303.6L118.2 298.6" stroke="#e80000"/><path d="M91.2 303.6L118.2 298.6" stroke="#ff2020" stroke-width="1.5"/>
<path d="M553.5 396.3L520.8 395.1" stroke="#bdbdbd"/><path d="M553.5 396.3L520.8 395.1" stroke="#e4e4e4" stroke-width="1.5"/>
<circle cx="73.4" cy="462" r="4.4" fill="url(#gO)"/>
<path d="M186.8 529.5L168.2 533" stroke="#bdbdbd"/><path d="M186.8 529.5L168.2 533" stroke="#e4e4e4" stroke-width="1.5"/>
<circle cx="436" cy="474.4" r="4.4" fill="url(#gO)"/>
<path d="M429.5 542.6L439.2 556.3" stroke="#e80000"/><path d="M429.5 542.6L439.2 556.3" stroke="#ff2020" stroke-width="1.5"/>
<path d="M325.5 171.6L331.9 175.1" stroke="#bdbdbd"/><path d="M325.5 171.6L331.9 175.1" stroke="#e4e4e4" stroke-width="1.5"/>
<path d="M194.3 492.8L190.3 458.1" stroke="#e80000"/><path d="M194.3 492.8L190.3 458.1" stroke="#ff2020" stroke-width="1.5"/>
<path d="M209.2 178.7L228.7 179.5" stroke="#bdbdbd"/><path d="M209.2 178.7L228.7 179.5" stroke="#e4e4e4" stroke-width="1.5"/>
<path d="M186.6 300.5L197.5 315.7" stroke="#bdbdbd"/><path d="M186.6 300.5L197.5 315.7" stroke="#e4e4e4" stroke-width="1.5"/>
<path d="M428 405.1L417.6 399.5" stroke="#bdbdbd"/><path d="M428 405.1L417.6 399.5" stroke="#e4e4e4" stroke-width="1.5"/>
<path d="M432 439.7L435.6 470.6" stroke="#e80000"/><path d="M432 439.7L435.6 470.6" stroke="#ff2020" stroke-width="1.5"/>
<polygon points="61.7,235.1 122.1,180.7 41.1,180.7" fill="rgb(0,103,103)" fill-opacity="0.6"/>
<polygon points="57.4,151.6 122.1,180.7 41.1,180.7" fill="rgb(0,211,211)" fill-opacity="0.6"/>
<path d="M70.6 187L96.3 183.9" stroke="#00e6ee"/><path d="M70.6 187L96.3 183.9" stroke="#30ffff" stroke-width="1.5"/>
<path d="M96.3 183.9L122.1 180.7" stroke="#e80000" stroke-width="3.0"/><path d="M96.3 183.9L122.1 180.7" stroke="#ff2020" stroke-width="1.1"/>
<path d="M70.6 187L55.8 183.9" stroke="#00e6ee"/><path d="M70.6 187L55.8 183.9" stroke="#30ffff" stroke-width="1.5"/>
<path d="M55.8 183.9L41.1 180.7" stroke="#e80000" stroke-width="3.0"/><path d="M55.8 183.9L41.1 180.7" stroke="#ff2020" stroke-width="1.1"/>
<circle cx="70.6" cy="187" r="12.8" fill="url(#gS)"/>
<path d="M68.7 197.1L66.2 211.1" stroke="#00e6ee"/><path d="M68.7 197.1L66.2 211.1" stroke="#30ffff" stroke-width="1.5"/>
<path d="M67.8 179.6L64 169.3" stroke="#00e6ee"/><path d="M67.8 179.6L64 169.3" stroke="#30ffff" stroke-width="1.5"/>
<path d="M405.9 172.6L396.5 167.5" stroke="#e80000"/><path d="M405.9 172.6L396.5 167.5" stroke="#ff2020" stroke-width="1.5"/>
<path d="M196.8 389.9L186 374.7" stroke="#e80000"/><path d="M196.8 389.9L186 374.7" stroke="#ff2020" stroke-width="1.5"/>
<polygon points="57.4,151.6 61.7,235.1 41.1,180.7" fill="rgb(0,139,139)" fill-opacity="0.6"/>
<polygon points="57.4,151.6 61.7,235.1 122.1,180.7" fill="rgb(0,229,229)" fill-opacity="0.6"/>
<path d="M66.2 211.1L61.7 235.1" stroke="#8e8888" stroke-width="2.8"/><path d="M66.2 211.1L61.7 235.1" stroke="#7cb0b0" stroke-width="1.1"/>
<path d="M64 169.3L57.4 151.6" stroke="#8e8888" stroke-width="2.8"/><path d="M64 169.3L57.4 151.6" stroke="#7cb0b0" stroke-width="1.1"/>
<circle cx="41.1" cy="180.7" r="4.4" fill="url(#gO)"/>
<circle cx="122.1" cy="180.7" r="4.4" fill="url(#gO)"/>
<polygon points="325.2,327.1 320.9,243.6 260.5,298" fill="rgb(0,112,112)" fill-opacity="0.6"/>
<polygon points="325.2,327.1 320.9,243.6 341.5,298" fill="rgb(0,202,202)" fill-opacity="0.6"/>
<path d="M312 291.7L318.6 309.4" stroke="#00e6ee"/><path d="M312 291.7L318.6 309.4" stroke="#30ffff" stroke-width="1.5"/>
<path d="M318.6 309.4L325.2 327.1" stroke="#e80000" stroke-width="3.0"/><path d="M318.6 309.4L325.2 327.1" stroke="#ff2020" stroke-width="1.1"/>
<path d="M312 291.7L316.4 267.6" stroke="#00e6ee"/><path d="M312 291.7L316.4 267.6" stroke="#30ffff" stroke-width="1.5"/>
<path d="M316.4 267.6L320.9 243.6" stroke="#e80000" stroke-width="3.0"/><path d="M316.4 267.6L320.9 243.6" stroke="#ff2020" stroke-width="1.1"/>
<circle cx="312" cy="291.7" r="12.8" fill="url(#gS)"/>
<path d="M186.6 300.5L195.3 274" stroke="#bdbdbd"/><path d="M186.6 300.5L195.3 274" stroke="#e4e4e4" stroke-width="1.5"/>
<path d="M301.3 293L286.3 294.8" stroke="#00e6ee"/><path d="M301.3 293L286.3 294.8" stroke="#30ffff" stroke-width="1.5"/>
<path d="M318.2 293L326.8 294.8" stroke="#00e6ee"/><path d="M318.2 293L326.8 294.8" stroke="#30ffff" stroke-width="1.5"/>
<polygon points="320.9,243.6 341.5,298 260.5,298" fill="rgb(0,237,237)" fill-opacity="0.6"/>
<polygon points="325.2,327.1 341.5,298 260.5,298" fill="rgb(0,130,130)" fill-opacity="0.6"/>
<path d="M641.6 392.1L655.7 390.4" stroke="#00e6ee"/><path d="M641.6 392.1L655.7 390.4" stroke="#30ffff" stroke-width="1.5"/>
<path d="M286.3 294.8L260.5 298" stroke="#8e8888" stroke-width="2.8"/><path d="M286.3 294.8L260.5 298" stroke="#7cb0b0" stroke-width="1.1"/>
<path d="M326.8 294.8L341.5 298" stroke="#8e8888" stroke-width="2.8"/><path d="M326.8 294.8L341.5 298" stroke="#7cb0b0" stroke-width="1.1"/>
<circle cx="325.2" cy="327.1" r="4.4" fill="url(#gO)"/>
<circle cx="320.9" cy="243.6" r="4.4" fill="url(#gO)"/>
<circle cx="553.5" cy="396.3" r="16.3" fill="url(#gZ)"/>
<path d="M553.4 411.3L553.2 433.4" stroke="#bdbdbd"/><path d="M553.4 411.3L553.2 433.4" stroke="#e4e4e4" stroke-width="1.5"/>
<path d="M202.3 529.5L208.7 533" stroke="#bdbdbd"/><path d="M202.3 529.5L208.7 533" stroke="#e4e4e4" stroke-width="1.5"/>
<path d="M553.2 433.4L552.9 470.5" stroke="#e80000"/><path d="M553.2 433.4L552.9 470.5" stroke="#ff2020" stroke-width="1.5"/>
<path d="M192.7 188.3L187.3 204.7" stroke="#bdbdbd"/><path d="M192.7 188.3L187.3 204.7" stroke="#e4e4e4" stroke-width="1.5"/>
<path d="M428 405.1L458.1 399.5" stroke="#bdbdbd"/><path d="M428 405.1L458.1 399.5" stroke="#e4e4e4" stroke-width="1.5"/>
<path d="M86 536.7L105.5 537.4" stroke="#bdbdbd"/><path d="M86 536.7L105.5 537.4" stroke="#e4e4e4" stroke-width="1.5"/>
<path d="M186.6 300.5L153.9 299.2" stroke="#bdbdbd"/><path d="M186.6 300.5L153.9 299.2" stroke="#e4e4e4" stroke-width="1.5"/>
<path d="M427.3 500.9L435.1 477.1" stroke="#e80000"/><path d="M427.3 500.9L435.1 477.1" stroke="#ff2020" stroke-width="1.5"/>
<path d="M282.7 530.5L273.3 525.5" stroke="#e80000"/><path d="M282.7 530.5L273.3 525.5" stroke="#ff2020" stroke-width="1.5"/>
<path d="M627.4 393.9L641.6 392.1" stroke="#e80000"/><path d="M627.4 393.9L641.6 392.1" stroke="#ff2020" stroke-width="1.5"/>
<path d="M291.4 175.1L261.4 180.7" stroke="#e80000"/><path d="M291.4 175.1L261.4 180.7" stroke="#ff2020" stroke-width="1.5"/>
<circle cx="69.1" cy="378.5" r="4.4" fill="url(#gO)"/>
<circle cx="476.4" cy="167" r="4.4" fill="url(#gO)"/>
<path d="M191.9 172.4L185.1 163" stroke="#bdbdbd"/><path d="M191.9 172.4L185.1 163" stroke="#e4e4e4" stroke-width="1.5"/>
<path d="M428 405.1L432 439.7" stroke="#bdbdbd"/><path d="M428 405.1L432 439.7" stroke="#e4e4e4" stroke-width="1.5"/>
<path d="M65.1 343.9L68.7 374.7" stroke="#e80000"/><path d="M65.1 343.9L68.7 374.7" stroke="#ff2020" stroke-width="1.5"/>
<path d="M391.1 406.4L358.1 407.5" stroke="#e80000"/><path d="M391.1 406.4L358.1 407.5" stroke="#ff2020" stroke-width="1.5"/>
<path d="M551.9 382.3L549.5 361.7" stroke="#bdbdbd"/><path d="M551.9 382.3L549.5 361.7" stroke="#e4e4e4" stroke-width="1.5"/>
<path d="M228.7 179.5L261.4 180.7" stroke="#e80000"/><path d="M228.7 179.5L261.4 180.7" stroke="#ff2020" stroke-width="1.5"/>
<path d="M509.1 168.2L480 167.1" stroke="#e80000"/><path d="M509.1 168.2L480 167.1" stroke="#ff2020" stroke-width="1.5"/>
<path d="M428 405.1L391.1 406.4" stroke="#bdbdbd"/><path d="M428 405.1L391.1 406.4" stroke="#e4e4e4" stroke-width="1.5"/>
<circle cx="186.6" cy="300.5" r="16.3" fill="url(#gZ)"/>
<path d="M168.2 533L138.2 538.6" stroke="#e80000"/><path d="M168.2 533L138.2 538.6" stroke="#ff2020" stroke-width="1.5"/>
<path d="M428.3 368L428.6 335" stroke="#e80000"/><path d="M428.3 368L428.6 335" stroke="#ff2020" stroke-width="1.5"/>
<path d="M186.5 315.5L186.3 337.6" stroke="#bdbdbd"/><path d="M186.5 315.5L186.3 337.6" stroke="#e4e4e4" stroke-width="1.5"/>
<circle cx="353.2" cy="524.9" r="4.4" fill="url(#gO)"/>
<path d="M428 405.1L428.3 368" stroke="#bdbdbd"/><path d="M428 405.1L428.3 368" stroke="#e4e4e4" stroke-width="1.5"/>
<path d="M700.3 392.1L692.2 390.4" stroke="#00e6ee"/><path d="M700.3 392.1L692.2 390.4" stroke="#30ffff" stroke-width="1.5"/>
<path d="M186.3 337.6L186 374.7" stroke="#e80000"/><path d="M186.3 337.6L186 374.7" stroke="#ff2020" stroke-width="1.5"/>
<circle cx="428" cy="405.1" r="16.3" fill="url(#gZ)"/>
<path d="M61.1 309.3L91.2 303.6" stroke="#bdbdbd"/><path d="M61.1 309.3L91.2 303.6" stroke="#e4e4e4" stroke-width="1.5"/>
<path d="M201.5 300L223.5 299.2" stroke="#bdbdbd"/><path d="M201.5 300L223.5 299.2" stroke="#e4e4e4" stroke-width="1.5"/>
<path d="M446.4 172.6L473.4 167.5" stroke="#e80000"/><path d="M446.4 172.6L473.4 167.5" stroke="#ff2020" stroke-width="1.5"/>
<path d="M105.5 537.4L138.2 538.6" stroke="#e80000"/><path d="M105.5 537.4L138.2 538.6" stroke="#ff2020" stroke-width="1.5"/>
<circle cx="428.6" cy="330.9" r="4.4" fill="url(#gO)"/>
<path d="M542 398.5L523.4 402" stroke="#bdbdbd"/><path d="M542 398.5L523.4 402" stroke="#e4e4e4" stroke-width="1.5"/>
<path d="M223.5 299.2L260.5 298" stroke="#e80000"/><path d="M223.5 299.2L260.5 298" stroke="#ff2020" stroke-width="1.5"/>
<path d="M385.9 526.1L356.8 525" stroke="#e80000"/><path d="M385.9 526.1L356.8 525" stroke="#ff2020" stroke-width="1.5"/>
<path d="M549.5 361.7L545.5 327.1" stroke="#e80000"/><path d="M549.5 361.7L545.5 327.1" stroke="#ff2020" stroke-width="1.5"/>
<path d="M61.1 309.3L65.1 343.9" stroke="#bdbdbd"/><path d="M61.1 309.3L65.1 343.9" stroke="#e4e4e4" stroke-width="1.5"/>
<path d="M185 286.5L182.6 265.9" stroke="#bdbdbd"/><path d="M185 286.5L182.6 265.9" stroke="#e4e4e4" stroke-width="1.5"/>
<path d="M323.2 530.5L350.2 525.5" stroke="#e80000"/><path d="M323.2 530.5L350.2 525.5" stroke="#ff2020" stroke-width="1.5"/>
<path d="M187.3 204.7L178.6 231.2" stroke="#e80000"/><path d="M187.3 204.7L178.6 231.2" stroke="#ff2020" stroke-width="1.5"/>
<path d="M331.9 175.1L342.4 180.7" stroke="#e80000"/><path d="M331.9 175.1L342.4 180.7" stroke="#ff2020" stroke-width="1.5"/>
<circle cx="260.5" cy="298" r="4.4" fill="url(#gO)"/>
<path d="M61.4 272.2L61.7 239.1" stroke="#e80000"/><path d="M61.4 272.2L61.7 239.1" stroke="#ff2020" stroke-width="1.5"/>
<path d="M557.5 398.5L563.9 402" stroke="#bdbdbd"/><path d="M557.5 398.5L563.9 402" stroke="#e4e4e4" stroke-width="1.5"/>
<path d="M61.1 309.3L61.4 272.2" stroke="#bdbdbd"/><path d="M61.1 309.3L61.4 272.2" stroke="#e4e4e4" stroke-width="1.5"/>
<circle cx="61.1" cy="309.3" r="16.3" fill="url(#gZ)"/>
<path d="M441.2 405.6L460.7 406.4" stroke="#bdbdbd"/><path d="M441.2 405.6L460.7 406.4" stroke="#e4e4e4" stroke-width="1.5"/>
<path d="M418.6 527.4L429.5 542.6" stroke="#bdbdbd"/><path d="M418.6 527.4L429.5 542.6" stroke="#e4e4e4" stroke-width="1.5"/>
<path d="M708.4 393.9L700.3 392.1" stroke="#e80000"/><path d="M708.4 393.9L700.3 392.1" stroke="#ff2020" stroke-width="1.5"/>
<polygon points="293.7,462 354.1,407.6 273.1,407.6" fill="rgb(0,103,103)" fill-opacity="0.6"/>
<polygon points="289.4,378.5 354.1,407.6 273.1,407.6" fill="rgb(0,211,211)" fill-opacity="0.6"/>
<path d="M302.6 413.9L328.3 410.8" stroke="#00e6ee"/><path d="M302.6 413.9L328.3 410.8" stroke="#30ffff" stroke-width="1.5"/>
<path d="M328.3 410.8L354.1 407.6" stroke="#e80000" stroke-width="3.0"/><path d="M328.3 410.8L354.1 407.6" stroke="#ff2020" stroke-width="1.1"/>
<path d="M302.6 413.9L287.8 410.8" stroke="#00e6ee"/><path d="M302.6 413.9L287.8 410.8" stroke="#30ffff" stroke-width="1.5"/>
<path d="M287.8 410.8L273.1 407.6" stroke="#e80000" stroke-width="3.0"/><path d="M287.8 410.8L273.1 407.6" stroke="#ff2020" stroke-width="1.1"/>
<circle cx="302.6" cy="413.9" r="12.8" fill="url(#gS)"/>
<path d="M541.8 169.4L509.1 168.2" stroke="#bdbdbd"/><path d="M541.8 169.4L509.1 168.2" stroke="#e4e4e4" stroke-width="1.5"/>
<path d="M300.7 424L298.2 438" stroke="#00e6ee"/><path d="M300.7 424L298.2 438" stroke="#30ffff" stroke-width="1.5"/>
<path d="M299.8 406.5L296 396.2" stroke="#00e6ee"/><path d="M299.8 406.5L296 396.2" stroke="#30ffff" stroke-width="1.5"/>
<polygon points="289.4,378.5 293.7,462 273.1,407.6" fill="rgb(0,139,139)" fill-opacity="0.6"/>
<polygon points="289.4,378.5 293.7,462 354.1,407.6" fill="rgb(0,229,229)" fill-opacity="0.6"/>
<path d="M298.2 438L293.7 462" stroke="#8e8888" stroke-width="2.8"/><path d="M298.2 438L293.7 462" stroke="#7cb0b0" stroke-width="1.1"/>
<path d="M296 396.2L289.4 378.5" stroke="#8e8888" stroke-width="2.8"/><path d="M296 396.2L289.4 378.5" stroke="#7cb0b0" stroke-width="1.1"/>
<circle cx="61.7" cy="235.1" r="4.4" fill="url(#gO)"/>
<circle cx="273.1" cy="407.6" r="4.4" fill="url(#gO)"/>
<circle cx="354.1" cy="407.6" r="4.4" fill="url(#gO)"/>
<polygon points="557.2,554 552.9,470.5 492.5,524.9" fill="rgb(0,112,112)" fill-opacity="0.6"/>
<polygon points="557.2,554 552.9,470.5 573.5,524.9" fill="rgb(0,202,202)" fill-opacity="0.6"/>
<path d="M175.1 302.6L156.5 306.1" stroke="#bdbdbd"/><path d="M175.1 302.6L156.5 306.1" stroke="#e4e4e4" stroke-width="1.5"/>
<path d="M544 518.6L550.6 536.3" stroke="#00e6ee"/><path d="M544 518.6L550.6 536.3" stroke="#30ffff" stroke-width="1.5"/>
<path d="M550.6 536.3L557.2 554" stroke="#e80000" stroke-width="3.0"/><path d="M550.6 536.3L557.2 554" stroke="#ff2020" stroke-width="1.1"/>
<path d="M544 518.6L548.4 494.5" stroke="#00e6ee"/><path d="M544 518.6L548.4 494.5" stroke="#30ffff" stroke-width="1.5"/>
<path d="M548.4 494.5L552.9 470.5" stroke="#e80000" stroke-width="3.0"/><path d="M548.4 494.5L552.9 470.5" stroke="#ff2020" stroke-width="1.1"/>
<circle cx="544" cy="518.6" r="12.8" fill="url(#gS)"/>
<circle cx="424.3" cy="247.5" r="4.4" fill="url(#gO)"/>
<path d="M418.6 527.4L427.3 500.9" stroke="#bdbdbd"/><path d="M418.6 527.4L427.3 500.9" stroke="#e4e4e4" stroke-width="1.5"/>
<path d="M533.3 519.9L518.3 521.7" stroke="#00e6ee"/><path d="M533.3 519.9L518.3 521.7" stroke="#30ffff" stroke-width="1.5"/>
<path d="M550.2 519.9L558.8 521.7" stroke="#00e6ee"/><path d="M550.2 519.9L558.8 521.7" stroke="#30ffff" stroke-width="1.5"/>
<polygon points="552.9,470.5 573.5,524.9 492.5,524.9" fill="rgb(0,237,237)" fill-opacity="0.6"/>
<polygon points="557.2,554 573.5,524.9 492.5,524.9" fill="rgb(0,130,130)" fill-opacity="0.6"/>
<path d="M518.3 521.7L492.5 524.9" stroke="#8e8888" stroke-width="2.8"/><path d="M518.3 521.7L492.5 524.9" stroke="#7cb0b0" stroke-width="1.1"/>
<path d="M558.8 521.7L573.5 524.9" stroke="#8e8888" stroke-width="2.8"/><path d="M558.8 521.7L573.5 524.9" stroke="#7cb0b0" stroke-width="1.1"/>
<circle cx="557.2" cy="554" r="4.4" fill="url(#gO)"/>
<circle cx="552.9" cy="470.5" r="4.4" fill="url(#gO)"/>
<path d="M417.8 315.7L427.5 329.4" stroke="#e80000"/><path d="M417.8 315.7L427.5 329.4" stroke="#ff2020" stroke-width="1.5"/>
<path d="M208.7 533L219.2 538.6" stroke="#e80000"/><path d="M208.7 533L219.2 538.6" stroke="#ff2020" stroke-width="1.5"/>
<path d="M182.6 265.9L178.6 231.2" stroke="#e80000"/><path d="M182.6 265.9L178.6 231.2" stroke="#ff2020" stroke-width="1.5"/>
<path d="M416.3 178.2L405.9 172.6" stroke="#bdbdbd"/><path d="M416.3 178.2L405.9 172.6" stroke="#e4e4e4" stroke-width="1.5"/>
<path d="M420.3 212.8L423.9 243.7" stroke="#e80000"/><path d="M420.3 212.8L423.9 243.7" stroke="#ff2020" stroke-width="1.5"/>
<path d="M424.7 415.2L419.3 431.6" stroke="#bdbdbd"/><path d="M424.7 415.2L419.3 431.6" stroke="#e4e4e4" stroke-width="1.5"/>
<path d="M185.1 163L174.3 147.8" stroke="#e80000"/><path d="M185.1 163L174.3 147.8" stroke="#ff2020" stroke-width="1.5"/>
<path d="M418.6 527.4L385.9 526.1" stroke="#bdbdbd"/><path d="M418.6 527.4L385.9 526.1" stroke="#e4e4e4" stroke-width="1.5"/>
<circle cx="541.8" cy="169.4" r="16.3" fill="url(#gZ)"/>
<path d="M523.4 402L493.4 407.6" stroke="#e80000"/><path d="M523.4 402L493.4 407.6" stroke="#ff2020" stroke-width="1.5"/>
<path d="M541.7 184.4L541.5 206.5" stroke="#bdbdbd"/><path d="M541.7 184.4L541.5 206.5" stroke="#e4e4e4" stroke-width="1.5"/>
<path d="M423.9 399.3L417.1 389.9" stroke="#bdbdbd"/><path d="M423.9 399.3L417.1 389.9" stroke="#e4e4e4" stroke-width="1.5"/>
<path d="M190.6 302.6L197 306.1" stroke="#bdbdbd"/><path d="M190.6 302.6L197 306.1" stroke="#e4e4e4" stroke-width="1.5"/>
<path d="M708.4 393.9L726.4 394.5" stroke="#e80000"/><path d="M708.4 393.9L726.4 394.5" stroke="#ff2020" stroke-width="1.5"/>
<path d="M541.5 206.5L541.2 243.6" stroke="#e80000"/><path d="M541.5 206.5L541.2 243.6" stroke="#ff2020" stroke-width="1.5"/>
<path d="M416.3 178.2L446.4 172.6" stroke="#bdbdbd"/><path d="M416.3 178.2L446.4 172.6" stroke="#e4e4e4" stroke-width="1.5"/>
<path d="M74.3 309.8L93.8 310.5" stroke="#bdbdbd"/><path d="M74.3 309.8L93.8 310.5" stroke="#e4e4e4" stroke-width="1.5"/>
<path d="M293.1 536.2L282.7 530.5" stroke="#bdbdbd"/><path d="M293.1 536.2L282.7 530.5" stroke="#e4e4e4" stroke-width="1.5"/>
<path d="M659.9 484.1L663.6 493.8" stroke="#00e6ee"/><path d="M659.9 484.1L663.6 493.8" stroke="#30ffff" stroke-width="1.5"/>
<path d="M460.7 406.4L493.4 407.6" stroke="#e80000"/><path d="M460.7 406.4L493.4 407.6" stroke="#ff2020" stroke-width="1.5"/>
<path d="M415.6 274L423.4 250.2" stroke="#e80000"/><path d="M415.6 274L423.4 250.2" stroke="#ff2020" stroke-width="1.5"/>
<path d="M271 303.6L261.6 298.6" stroke="#e80000"/><path d="M271 303.6L261.6 298.6" stroke="#ff2020" stroke-width="1.5"/>
<polygon points="190.3,458.1 186,374.7 125.6,429.1" fill="rgb(0,112,112)" fill-opacity="0.6"/>
<polygon points="190.3,458.1 186,374.7 206.6,429.1" fill="rgb(0,202,202)" fill-opacity="0.6"/>
<path d="M177.1 422.7L183.7 440.4" stroke="#00e6ee"/><path d="M177.1 422.7L183.7 440.4" stroke="#30ffff" stroke-width="1.5"/>
<path d="M183.7 440.4L190.3 458.1" stroke="#e80000" stroke-width="3.0"/><path d="M183.7 440.4L190.3 458.1" stroke="#ff2020" stroke-width="1.1"/>
<path d="M177.1 422.7L181.5 398.7" stroke="#00e6ee"/><path d="M177.1 422.7L181.5 398.7" stroke="#30ffff" stroke-width="1.5"/>
<path d="M181.5 398.7L186 374.7" stroke="#e80000" stroke-width="3.0"/><path d="M181.5 398.7L186 374.7" stroke="#ff2020" stroke-width="1.1"/>
<circle cx="177.1" cy="422.7" r="12.8" fill="url(#gS)"/>
<circle cx="57.4" cy="151.6" r="4.4" fill="url(#gO)"/>
<path d="M166.4 424L151.4 425.9" stroke="#00e6ee"/><path d="M166.4 424L151.4 425.9" stroke="#30ffff" stroke-width="1.5"/>
<path d="M183.3 424L191.9 425.9" stroke="#00e6ee"/><path d="M183.3 424L191.9 425.9" stroke="#30ffff" stroke-width="1.5"/>
<polygon points="186,374.7 206.6,429.1 125.6,429.1" fill="rgb(0,237,237)" fill-opacity="0.6"/>
<polygon points="190.3,458.1 206.6,429.1 125.6,429.1" fill="rgb(0,130,130)" fill-opacity="0.6"/>
<path d="M151.4 425.9L125.6 429.1" stroke="#8e8888" stroke-width="2.8"/><path d="M151.4 425.9L125.6 429.1" stroke="#7cb0b0" stroke-width="1.1"/>
<path d="M191.9 425.9L206.6 429.1" stroke="#8e8888" stroke-width="2.8"/><path d="M191.9 425.9L206.6 429.1" stroke="#7cb0b0" stroke-width="1.1"/>
<circle cx="190.3" cy="458.1" r="4.4" fill="url(#gO)"/>
<circle cx="186" cy="374.7" r="4.4" fill="url(#gO)"/>
<circle cx="418.6" cy="527.4" r="16.3" fill="url(#gZ)"/>
<path d="M416.3 178.2L420.3 212.8" stroke="#bdbdbd"/><path d="M416.3 178.2L420.3 212.8" stroke="#e4e4e4" stroke-width="1.5"/>
<path d="M379.4 179.5L346.4 180.6" stroke="#e80000"/><path d="M379.4 179.5L346.4 180.6" stroke="#ff2020" stroke-width="1.5"/>
<path d="M293.1 536.2L323.2 530.5" stroke="#bdbdbd"/><path d="M293.1 536.2L323.2 530.5" stroke="#e4e4e4" stroke-width="1.5"/>
<path d="M433.5 526.9L455.5 526.1" stroke="#bdbdbd"/><path d="M433.5 526.9L455.5 526.1" stroke="#e4e4e4" stroke-width="1.5"/>
<path d="M726.4 394.5L744.4 395.2" stroke="#bdbdbd"/><path d="M726.4 394.5L744.4 395.2" stroke="#e4e4e4" stroke-width="1.5"/>
<path d="M416.3 178.2L379.4 179.5" stroke="#bdbdbd"/><path d="M416.3 178.2L379.4 179.5" stroke="#e4e4e4" stroke-width="1.5"/>
<path d="M156.5 306.1L126.5 311.7" stroke="#e80000"/><path d="M156.5 306.1L126.5 311.7" stroke="#ff2020" stroke-width="1.5"/>
<path d="M455.5 526.1L492.5 524.9" stroke="#e80000"/><path d="M455.5 526.1L492.5 524.9" stroke="#ff2020" stroke-width="1.5"/>
<circle cx="341.5" cy="298" r="4.4" fill="url(#gO)"/>
<circle cx="416.3" cy="178.2" r="16.3" fill="url(#gZ)"/>
<path d="M656.3 474.4L659.9 484.1" stroke="#e80000"/><path d="M656.3 474.4L659.9 484.1" stroke="#ff2020" stroke-width="1.5"/>
<path d="M256.2 537.4L223.2 538.5" stroke="#e80000"/><path d="M256.2 537.4L223.2 538.5" stroke="#ff2020" stroke-width="1.5"/>
<path d="M417 513.4L414.6 492.8" stroke="#bdbdbd"/><path d="M417 513.4L414.6 492.8" stroke="#e4e4e4" stroke-width="1.5"/>
<path d="M93.8 310.5L126.5 311.7" stroke="#e80000"/><path d="M93.8 310.5L126.5 311.7" stroke="#ff2020" stroke-width="1.5"/>
<path d="M530.3 171.6L511.7 175.1" stroke="#bdbdbd"/><path d="M530.3 171.6L511.7 175.1" stroke="#e4e4e4" stroke-width="1.5"/>
<path d="M374.2 299.2L345.1 298.1" stroke="#e80000"/><path d="M374.2 299.2L345.1 298.1" stroke="#ff2020" stroke-width="1.5"/>
<path d="M419.3 431.6L410.6 458.1" stroke="#e80000"/><path d="M419.3 431.6L410.6 458.1" stroke="#ff2020" stroke-width="1.5"/>
<path d="M563.9 402L574.4 407.6" stroke="#e80000"/><path d="M563.9 402L574.4 407.6" stroke="#ff2020" stroke-width="1.5"/>
<path d="M293.1 536.2L256.2 537.4" stroke="#bdbdbd"/><path d="M293.1 536.2L256.2 537.4" stroke="#e4e4e4" stroke-width="1.5"/>
<circle cx="492.5" cy="524.9" r="4.4" fill="url(#gO)"/>
<path d="M293.4 499.1L293.7 466" stroke="#e80000"/><path d="M293.4 499.1L293.7 466" stroke="#ff2020" stroke-width="1.5"/>
<path d="M293.1 536.2L293.4 499.1" stroke="#bdbdbd"/><path d="M293.1 536.2L293.4 499.1" stroke="#e4e4e4" stroke-width="1.5"/>
<circle cx="293.1" cy="536.2" r="16.3" fill="url(#gZ)"/>
<path d="M311.5 303.6L338.5 298.6" stroke="#e80000"/><path d="M311.5 303.6L338.5 298.6" stroke="#ff2020" stroke-width="1.5"/>
<circle cx="293.7" cy="462" r="4.4" fill="url(#gO)"/>
<path d="M407.1 529.5L388.5 533" stroke="#bdbdbd"/><path d="M407.1 529.5L388.5 533" stroke="#e4e4e4" stroke-width="1.5"/>
<path d="M414.6 492.8L410.6 458.1" stroke="#e80000"/><path d="M414.6 492.8L410.6 458.1" stroke="#ff2020" stroke-width="1.5"/>
<path d="M429.5 178.7L449 179.5" stroke="#bdbdbd"/><path d="M429.5 178.7L449 179.5" stroke="#e4e4e4" stroke-width="1.5"/>
<path d="M406.9 300.5L417.8 315.7" stroke="#bdbdbd"/><path d="M406.9 300.5L417.8 315.7" stroke="#e4e4e4" stroke-width="1.5"/>
<polygon points="282,235.1 342.4,180.7 261.4,180.7" fill="rgb(0,103,103)" fill-opacity="0.6"/>
<polygon points="277.7,151.6 342.4,180.7 261.4,180.7" fill="rgb(0,211,211)" fill-opacity="0.6"/>
<path d="M290.9 187L316.6 183.9" stroke="#00e6ee"/><path d="M290.9 187L316.6 183.9" stroke="#30ffff" stroke-width="1.5"/>
<path d="M316.6 183.9L342.4 180.7" stroke="#e80000" stroke-width="3.0"/><path d="M316.6 183.9L342.4 180.7" stroke="#ff2020" stroke-width="1.1"/>
<path d="M290.9 187L276.1 183.9" stroke="#00e6ee"/><path d="M290.9 187L276.1 183.9" stroke="#30ffff" stroke-width="1.5"/>
<path d="M276.1 183.9L261.4 180.7" stroke="#e80000" stroke-width="3.0"/><path d="M276.1 183.9L261.4 180.7" stroke="#ff2020" stroke-width="1.1"/>
<path d="M656.3 474.4L651.5 488.9" stroke="#e80000"/><path d="M656.3 474.4L651.5 488.9" stroke="#ff2020" stroke-width="1.5"/>
<circle cx="290.9" cy="187" r="12.8" fill="url(#gS)"/>
<path d="M289 197.1L286.5 211.1" stroke="#00e6ee"/><path d="M289 197.1L286.5 211.1" stroke="#30ffff" stroke-width="1.5"/>
<path d="M288.1 179.6L284.3 169.3" stroke="#00e6ee"/><path d="M288.1 179.6L284.3 169.3" stroke="#30ffff" stroke-width="1.5"/>
<path d="M417.1 389.9L406.3 374.7" stroke="#e80000"/><path d="M417.1 389.9L406.3 374.7" stroke="#ff2020" stroke-width="1.5"/>
<polygon points="277.7,151.6 282,235.1 261.4,180.7" fill="rgb(0,139,139)" fill-opacity="0.6"/>
<polygon points="277.7,151.6 282,235.1 342.4,180.7" fill="rgb(0,229,229)" fill-opacity="0.6"/>
<path d="M286.5 211.1L282 235.1" stroke="#8e8888" stroke-width="2.8"/><path d="M286.5 211.1L282 235.1" stroke="#7cb0b0" stroke-width="1.1"/>
<path d="M284.3 169.3L277.7 151.6" stroke="#8e8888" stroke-width="2.8"/><path d="M284.3 169.3L277.7 151.6" stroke="#7cb0b0" stroke-width="1.1"/>
<circle cx="261.4" cy="180.7" r="4.4" fill="url(#gO)"/>
<circle cx="342.4" cy="180.7" r="4.4" fill="url(#gO)"/>
<polygon points="545.5,327.1 541.2,243.6 480.8,298" fill="rgb(0,112,112)" fill-opacity="0.6"/>
<polygon points="545.5,327.1 541.2,243.6 561.8,298" fill="rgb(0,202,202)" fill-opacity="0.6"/>
<path d="M532.3 291.7L538.9 309.4" stroke="#00e6ee"/><path d="M532.3 291.7L538.9 309.4" stroke="#30ffff" stroke-width="1.5"/>
<path d="M538.9 309.4L545.5 327.1" stroke="#e80000" stroke-width="3.0"/><path d="M538.9 309.4L545.5 327.1" stroke="#ff2020" stroke-width="1.1"/>
<path d="M532.3 291.7L536.7 267.6" stroke="#00e6ee"/><path d="M532.3 291.7L536.7 267.6" stroke="#30ffff" stroke-width="1.5"/>
<path d="M536.7 267.6L541.2 243.6" stroke="#e80000" stroke-width="3.0"/><path d="M536.7 267.6L541.2 243.6" stroke="#ff2020" stroke-width="1.1"/>
<circle cx="532.3" cy="291.7" r="12.8" fill="url(#gS)"/>
<path d="M406.9 300.5L415.6 274" stroke="#bdbdbd"/><path d="M406.9 300.5L415.6 274" stroke="#e4e4e4" stroke-width="1.5"/>
<path d="M521.6 293L506.6 294.8" stroke="#00e6ee"/><path d="M521.6 293L506.6 294.8" stroke="#30ffff" stroke-width="1.5"/>
<path d="M538.5 293L547.1 294.8" stroke="#00e6ee"/><path d="M538.5 293L547.1 294.8" stroke="#30ffff" stroke-width="1.5"/>
<polygon points="541.2,243.6 561.8,298 480.8,298" fill="rgb(0,237,237)" fill-opacity="0.6"/>
<polygon points="545.5,327.1 561.8,298 480.8,298" fill="rgb(0,130,130)" fill-opacity="0.6"/>
<path d="M506.6 294.8L480.8 298" stroke="#8e8888" stroke-width="2.8"/><path d="M506.6 294.8L480.8 298" stroke="#7cb0b0" stroke-width="1.1"/>
<path d="M547.1 294.8L561.8 298" stroke="#8e8888" stroke-width="2.8"/><path d="M547.1 294.8L561.8 298" stroke="#7cb0b0" stroke-width="1.1"/>
<circle cx="545.5" cy="327.1" r="4.4" fill="url(#gO)"/>
<circle cx="541.2" cy="243.6" r="4.4" fill="url(#gO)"/>
<path d="M197 306.1L207.5 311.7" stroke="#e80000"/><path d="M197 306.1L207.5 311.7" stroke="#ff2020" stroke-width="1.5"/>
<circle cx="125.6" cy="429.1" r="4.4" fill="url(#gO)"/>
<path d="M651.4 317.7L653.8 304.5" stroke="#00e6ee"/><path d="M651.4 317.7L653.8 304.5" stroke="#30ffff" stroke-width="1.5"/>
<path d="M422.6 529.5L429 533" stroke="#bdbdbd"/><path d="M422.6 529.5L429 533" stroke="#e4e4e4" stroke-width="1.5"/>
<path d="M413 188.3L407.6 204.7" stroke="#bdbdbd"/><path d="M413 188.3L407.6 204.7" stroke="#e4e4e4" stroke-width="1.5"/>
<path d="M306.3 536.7L325.8 537.4" stroke="#bdbdbd"/><path d="M306.3 536.7L325.8 537.4" stroke="#e4e4e4" stroke-width="1.5"/>
<polygon points="158.8,593 219.2,538.6 138.2,538.6" fill="rgb(0,103,103)" fill-opacity="0.6"/>
<polygon points="154.5,509.6 219.2,538.6 138.2,538.6" fill="rgb(0,211,211)" fill-opacity="0.6"/>
<path d="M167.7 545L193.4 541.8" stroke="#00e6ee"/><path d="M167.7 545L193.4 541.8" stroke="#30ffff" stroke-width="1.5"/>
<path d="M193.4 541.8L219.2 538.6" stroke="#e80000" stroke-width="3.0"/><path d="M193.4 541.8L219.2 538.6" stroke="#ff2020" stroke-width="1.1"/>
<path d="M167.7 545L152.9 541.8" stroke="#00e6ee"/><path d="M167.7 545L152.9 541.8" stroke="#30ffff" stroke-width="1.5"/>
<path d="M152.9 541.8L138.2 538.6" stroke="#e80000" stroke-width="3.0"/><path d="M152.9 541.8L138.2 538.6" stroke="#ff2020" stroke-width="1.1"/>
<circle cx="167.7" cy="545" r="12.8" fill="url(#gS)"/>
<path d="M406.9 300.5L374.2 299.2" stroke="#bdbdbd"/><path d="M406.9 300.5L374.2 299.2" stroke="#e4e4e4" stroke-width="1.5"/>
<path d="M165.8 555L163.3 569" stroke="#00e6ee"/><path d="M165.8 555L163.3 569" stroke="#30ffff" stroke-width="1.5"/>
<path d="M164.9 537.6L161.1 527.3" stroke="#00e6ee"/><path d="M164.9 537.6L161.1 527.3" stroke="#30ffff" stroke-width="1.5"/>
<path d="M503 530.5L493.6 525.5" stroke="#e80000"/><path d="M503 530.5L493.6 525.5" stroke="#ff2020" stroke-width="1.5"/>
<polygon points="154.5,509.6 158.8,593 138.2,538.6" fill="rgb(0,139,139)" fill-opacity="0.6"/>
<polygon points="154.5,509.6 158.8,593 219.2,538.6" fill="rgb(0,229,229)" fill-opacity="0.6"/>
<path d="M163.3 569L158.8 593" stroke="#8e8888" stroke-width="2.8"/><path d="M163.3 569L158.8 593" stroke="#7cb0b0" stroke-width="1.1"/>
<path d="M161.1 527.3L154.5 509.6" stroke="#8e8888" stroke-width="2.8"/><path d="M161.1 527.3L154.5 509.6" stroke="#7cb0b0" stroke-width="1.1"/>
<circle cx="138.2" cy="538.6" r="4.4" fill="url(#gO)"/>
<circle cx="219.2" cy="538.6" r="4.4" fill="url(#gO)"/>
<path d="M511.7 175.1L481.7 180.7" stroke="#e80000"/><path d="M511.7 175.1L481.7 180.7" stroke="#ff2020" stroke-width="1.5"/>
<circle cx="289.4" cy="378.5" r="4.4" fill="url(#gO)"/>
<path d="M412.2 172.4L405.4 163" stroke="#bdbdbd"/><path d="M412.2 172.4L405.4 163" stroke="#e4e4e4" stroke-width="1.5"/>
<path d="M281.4 309.3L271 303.6" stroke="#bdbdbd"/><path d="M281.4 309.3L271 303.6" stroke="#e4e4e4" stroke-width="1.5"/>
<path d="M285.4 343.9L289 374.7" stroke="#e80000"/><path d="M285.4 343.9L289 374.7" stroke="#ff2020" stroke-width="1.5"/>
<path d="M648.9 330.9L651.4 317.7" stroke="#e80000"/><path d="M648.9 330.9L651.4 317.7" stroke="#ff2020" stroke-width="1.5"/>
<path d="M449 179.5L481.7 180.7" stroke="#e80000"/><path d="M449 179.5L481.7 180.7" stroke="#ff2020" stroke-width="1.5"/>
<polygon points="178.6,231.2 174.3,147.8 113.9,202.2" fill="rgb(0,112,112)" fill-opacity="0.6"/>
<polygon points="178.6,231.2 174.3,147.8 194.9,202.2" fill="rgb(0,202,202)" fill-opacity="0.6"/>
<path d="M165.4 195.8L172 213.5" stroke="#00e6ee"/><path d="M165.4 195.8L172 213.5" stroke="#30ffff" stroke-width="1.5"/>
<path d="M172 213.5L178.6 231.2" stroke="#e80000" stroke-width="3.0"/><path d="M172 213.5L178.6 231.2" stroke="#ff2020" stroke-width="1.1"/>
<path d="M165.4 195.8L169.8 171.8" stroke="#00e6ee"/><path d="M165.4 195.8L169.8 171.8" stroke="#30ffff" stroke-width="1.5"/>
<path d="M169.8 171.8L174.3 147.8" stroke="#e80000" stroke-width="3.0"/><path d="M169.8 171.8L174.3 147.8" stroke="#ff2020" stroke-width="1.1"/>
<circle cx="165.4" cy="195.8" r="12.8" fill="url(#gS)"/>
<path d="M154.7 197.1L139.7 199" stroke="#00e6ee"/><path d="M154.7 197.1L139.7 199" stroke="#30ffff" stroke-width="1.5"/>
<path d="M171.6 197.1L180.2 199" stroke="#00e6ee"/><path d="M171.6 197.1L180.2 199" stroke="#30ffff" stroke-width="1.5"/>
<polygon points="174.3,147.8 194.9,202.2 113.9,202.2" fill="rgb(0,237,237)" fill-opacity="0.6"/>
<polygon points="178.6,231.2 194.9,202.2 113.9,202.2" fill="rgb(0,130,130)" fill-opacity="0.6"/>
<path d="M139.7 199L113.9 202.2" stroke="#8e8888" stroke-width="2.8"/><path d="M139.7 199L113.9 202.2" stroke="#7cb0b0" stroke-width="1.1"/>
<path d="M180.2 199L194.9 202.2" stroke="#8e8888" stroke-width="2.8"/><path d="M180.2 199L194.9 202.2" stroke="#7cb0b0" stroke-width="1.1"/>
<circle cx="178.6" cy="231.2" r="4.4" fill="url(#gO)"/>
<circle cx="174.3" cy="147.8" r="4.4" fill="url(#gO)"/>
<path d="M651.5 488.9L646.7 503.5" stroke="#bdbdbd"/><path d="M651.5 488.9L646.7 503.5" stroke="#e4e4e4" stroke-width="1.5"/>
<circle cx="406.9" cy="300.5" r="16.3" fill="url(#gZ)"/>
<path d="M388.5 533L358.5 538.6" stroke="#e80000"/><path d="M388.5 533L358.5 538.6" stroke="#ff2020" stroke-width="1.5"/>
<path d="M406.8 315.5L406.6 337.6" stroke="#bdbdbd"/><path d="M406.8 315.5L406.6 337.6" stroke="#e4e4e4" stroke-width="1.5"/>
<circle cx="573.5" cy="524.9" r="4.4" fill="url(#gO)"/>
<polygon points="627.4,393.9 648.9,330.9 574.4,407.6" fill="rgb(64,64,64)" fill-opacity="0.6"/>
<polygon points="656.3,474.4 627.4,393.9 574.4,407.6" fill="rgb(40,40,40)" fill-opacity="0.6"/>
<polygon points="708.4,393.9 627.4,393.9 648.9,330.9" fill="rgb(98,98,98)" fill-opacity="0.6"/>
<polygon points="708.4,393.9 656.3,474.4 713.7,407.6" fill="rgb(145,145,145)" fill-opacity="0.6"/>
<polygon points="708.4,393.9 656.3,474.4 627.4,393.9" fill="rgb(69,69,69)" fill-opacity="0.6"/>
<polygon points="630.9,458.1 656.3,474.4 574.4,407.6" fill="rgb(61,61,61)" fill-opacity="0.6"/>
<path d="M648.3 405.1L611.4 406.4" stroke="#bdbdbd"/><path d="M648.3 405.1L611.4 406.4" stroke="#e4e4e4" stroke-width="1.5"/>
<path d="M611.4 406.4L578.4 407.5" stroke="#e80000"/><path d="M611.4 406.4L578.4 407.5" stroke="#ff2020" stroke-width="1.5"/>
<path d="M648.3 405.1L637.9 399.5" stroke="#bdbdbd"/><path d="M648.3 405.1L637.9 399.5" stroke="#e4e4e4" stroke-width="1.5"/>
<path d="M637.9 399.5L628.5 394.4" stroke="#e80000"/><path d="M637.9 399.5L628.5 394.4" stroke="#ff2020" stroke-width="1.5"/>
<path d="M648.3 405.1L652.3 439.7" stroke="#bdbdbd"/><path d="M648.3 405.1L652.3 439.7" stroke="#e4e4e4" stroke-width="1.5"/>
<path d="M652.3 439.7L655.9 470.6" stroke="#e80000"/><path d="M652.3 439.7L655.9 470.6" stroke="#ff2020" stroke-width="1.5"/>
<path d="M648.3 405.1L648.6 368" stroke="#bdbdbd"/><path d="M648.3 405.1L648.6 368" stroke="#e4e4e4" stroke-width="1.5"/>
<path d="M648.6 368L648.9 335" stroke="#e80000"/><path d="M648.6 368L648.9 335" stroke="#ff2020" stroke-width="1.5"/>
<path d="M648.3 405.1L678.4 399.5" stroke="#bdbdbd"/><path d="M648.3 405.1L678.4 399.5" stroke="#e4e4e4" stroke-width="1.5"/>
<path d="M678.4 399.5L705.4 394.4" stroke="#e80000"/><path d="M678.4 399.5L705.4 394.4" stroke="#ff2020" stroke-width="1.5"/>
<path d="M406.6 337.6L406.3 374.7" stroke="#e80000"/><path d="M406.6 337.6L406.3 374.7" stroke="#ff2020" stroke-width="1.5"/>
<circle cx="627.4" cy="393.9" r="4.4" fill="url(#gO)"/>
<circle cx="648.3" cy="405.1" r="16.3" fill="url(#gZ)"/>
<path d="M281.4 309.3L311.5 303.6" stroke="#bdbdbd"/><path d="M281.4 309.3L311.5 303.6" stroke="#e4e4e4" stroke-width="1.5"/>
<path d="M645 415.2L639.6 431.6" stroke="#bdbdbd"/><path d="M645 415.2L639.6 431.6" stroke="#e4e4e4" stroke-width="1.5"/>
<path d="M639.6 431.6L630.9 458.1" stroke="#e80000"/><path d="M639.6 431.6L630.9 458.1" stroke="#ff2020" stroke-width="1.5"/>
<path d="M644.2 399.3L637.4 389.9" stroke="#bdbdbd"/><path d="M644.2 399.3L637.4 389.9" stroke="#e4e4e4" stroke-width="1.5"/>
<path d="M637.4 389.9L626.6 374.7" stroke="#e80000"/><path d="M637.4 389.9L626.6 374.7" stroke="#ff2020" stroke-width="1.5"/>
<path d="M661.5 405.6L681 406.4" stroke="#bdbdbd"/><path d="M661.5 405.6L681 406.4" stroke="#e4e4e4" stroke-width="1.5"/>
<path d="M681 406.4L713.7 407.6" stroke="#e80000"/><path d="M681 406.4L713.7 407.6" stroke="#ff2020" stroke-width="1.5"/>
<polygon points="626.6,374.7 648.9,330.9 574.4,407.6" fill="rgb(97,97,97)" fill-opacity="0.6"/>
<polygon points="626.6,374.7 648.9,330.9 713.7,407.6" fill="rgb(192,192,192)" fill-opacity="0.6"/>
<polygon points="708.4,393.9 648.9,330.9 713.7,407.6" fill="rgb(176,176,176)" fill-opacity="0.6"/>
<polygon points="630.9,458.1 656.3,474.4 713.7,407.6" fill="rgb(155,155,155)" fill-opacity="0.6"/>
<polygon points="630.9,458.1 626.6,374.7 713.7,407.6" fill="rgb(192,192,192)" fill-opacity="0.6"/>
<polygon points="630.9,458.1 626.6,374.7 574.4,407.6" fill="rgb(103,103,103)" fill-opacity="0.6"/>
<circle cx="656.3" cy="474.4" r="4.4" fill="url(#gO)"/>
<circle cx="708.4" cy="393.9" r="4.4" fill="url(#gO)"/>
<path d="M421.8 300L443.8 299.2" stroke="#bdbdbd"/><path d="M421.8 300L443.8 299.2" stroke="#e4e4e4" stroke-width="1.5"/>
<path d="M325.8 537.4L358.5 538.6" stroke="#e80000"/><path d="M325.8 537.4L358.5 538.6" stroke="#ff2020" stroke-width="1.5"/>
<circle cx="648.9" cy="330.9" r="4.4" fill="url(#gO)"/>
<path d="M443.8 299.2L480.8 298" stroke="#e80000"/><path d="M443.8 299.2L480.8 298" stroke="#ff2020" stroke-width="1.5"/>
<path d="M281.4 309.3L285.4 343.9" stroke="#bdbdbd"/><path d="M281.4 309.3L285.4 343.9" stroke="#e4e4e4" stroke-width="1.5"/>
<path d="M244.5 310.5L211.5 311.6" stroke="#e80000"/><path d="M244.5 310.5L211.5 311.6" stroke="#ff2020" stroke-width="1.5"/>
<path d="M405.3 286.5L402.9 265.9" stroke="#bdbdbd"/><path d="M405.3 286.5L402.9 265.9" stroke="#e4e4e4" stroke-width="1.5"/>
<path d="M648.9 330.9L642.9 322.6" stroke="#e80000"/><path d="M648.9 330.9L642.9 322.6" stroke="#ff2020" stroke-width="1.5"/>
<path d="M407.6 204.7L398.9 231.2" stroke="#e80000"/><path d="M407.6 204.7L398.9 231.2" stroke="#ff2020" stroke-width="1.5"/>
<path d="M281.4 309.3L244.5 310.5" stroke="#bdbdbd"/><path d="M281.4 309.3L244.5 310.5" stroke="#e4e4e4" stroke-width="1.5"/>
<circle cx="480.8" cy="298" r="4.4" fill="url(#gO)"/>
<path d="M281.7 272.2L282 239.1" stroke="#e80000"/><path d="M281.7 272.2L282 239.1" stroke="#ff2020" stroke-width="1.5"/>
<circle cx="206.6" cy="429.1" r="4.4" fill="url(#gO)"/>
<path d="M281.4 309.3L281.7 272.2" stroke="#bdbdbd"/><path d="M281.4 309.3L281.7 272.2" stroke="#e4e4e4" stroke-width="1.5"/>
<circle cx="281.4" cy="309.3" r="16.3" fill="url(#gZ)"/>
<polygon points="514,462 574.4,407.6 493.4,407.6" fill="rgb(0,103,103)" fill-opacity="0.6"/>
<polygon points="509.7,378.5 574.4,407.6 493.4,407.6" fill="rgb(0,211,211)" fill-opacity="0.6"/>
<path d="M522.9 413.9L548.6 410.8" stroke="#00e6ee"/><path d="M522.9 413.9L548.6 410.8" stroke="#30ffff" stroke-width="1.5"/>
<path d="M548.6 410.8L574.4 407.6" stroke="#e80000" stroke-width="3.0"/><path d="M548.6 410.8L574.4 407.6" stroke="#ff2020" stroke-width="1.1"/>
<path d="M522.9 413.9L508.1 410.8" stroke="#00e6ee"/><path d="M522.9 413.9L508.1 410.8" stroke="#30ffff" stroke-width="1.5"/>
<path d="M508.1 410.8L493.4 407.6" stroke="#e80000" stroke-width="3.0"/><path d="M508.1 410.8L493.4 407.6" stroke="#ff2020" stroke-width="1.1"/>
<circle cx="522.9" cy="413.9" r="12.8" fill="url(#gS)"/>
<path d="M521 424L518.5 438" stroke="#00e6ee"/><path d="M521 424L518.5 438" stroke="#30ffff" stroke-width="1.5"/>
<path d="M520.1 406.5L516.3 396.2" stroke="#00e6ee"/><path d="M520.1 406.5L516.3 396.2" stroke="#30ffff" stroke-width="1.5"/>
<polygon points="509.7,378.5 514,462 493.4,407.6" fill="rgb(0,139,139)" fill-opacity="0.6"/>
<polygon points="509.7,378.5 514,462 574.4,407.6" fill="rgb(0,229,229)" fill-opacity="0.6"/>
<path d="M518.5 438L514 462" stroke="#8e8888" stroke-width="2.8"/><path d="M518.5 438L514 462" stroke="#7cb0b0" stroke-width="1.1"/>
<path d="M516.3 396.2L509.7 378.5" stroke="#8e8888" stroke-width="2.8"/><path d="M516.3 396.2L509.7 378.5" stroke="#7cb0b0" stroke-width="1.1"/>
<circle cx="282" cy="235.1" r="4.4" fill="url(#gO)"/>
<path d="M730.2 404.5L746.7 401.4" stroke="#bdbdbd"/><path d="M730.2 404.5L746.7 401.4" stroke="#e4e4e4" stroke-width="1.5"/>
<circle cx="493.4" cy="407.6" r="4.4" fill="url(#gO)"/>
<circle cx="574.4" cy="407.6" r="4.4" fill="url(#gO)"/>
<path d="M395.4 302.6L376.8 306.1" stroke="#bdbdbd"/><path d="M395.4 302.6L376.8 306.1" stroke="#e4e4e4" stroke-width="1.5"/>
<path d="M429 533L439.5 538.6" stroke="#e80000"/><path d="M429 533L439.5 538.6" stroke="#ff2020" stroke-width="1.5"/>
<path d="M402.9 265.9L398.9 231.2" stroke="#e80000"/><path d="M402.9 265.9L398.9 231.2" stroke="#ff2020" stroke-width="1.5"/>
<path d="M405.4 163L394.6 147.8" stroke="#e80000"/><path d="M405.4 163L394.6 147.8" stroke="#ff2020" stroke-width="1.5"/>
<circle cx="158.8" cy="593" r="4.4" fill="url(#gO)"/>
<circle cx="113.9" cy="202.2" r="4.4" fill="url(#gO)"/>
<path d="M410.9 302.6L417.3 306.1" stroke="#bdbdbd"/><path d="M410.9 302.6L417.3 306.1" stroke="#e4e4e4" stroke-width="1.5"/>
<path d="M294.6 309.8L314.1 310.5" stroke="#bdbdbd"/><path d="M294.6 309.8L314.1 310.5" stroke="#e4e4e4" stroke-width="1.5"/>
<path d="M513.4 536.2L503 530.5" stroke="#bdbdbd"/><path d="M513.4 536.2L503 530.5" stroke="#e4e4e4" stroke-width="1.5"/>
<polygon points="147.1,366.1 207.5,311.7 126.5,311.7" fill="rgb(0,103,103)" fill-opacity="0.6"/>
<polygon points="142.8,282.7 207.5,311.7 126.5,311.7" fill="rgb(0,211,211)" fill-opacity="0.6"/>
<path d="M156 318.1L181.7 314.9" stroke="#00e6ee"/><path d="M156 318.1L181.7 314.9" stroke="#30ffff" stroke-width="1.5"/>
<path d="M181.7 314.9L207.5 311.7" stroke="#e80000" stroke-width="3.0"/><path d="M181.7 314.9L207.5 311.7" stroke="#ff2020" stroke-width="1.1"/>
<path d="M156 318.1L141.2 314.9" stroke="#00e6ee"/><path d="M156 318.1L141.2 314.9" stroke="#30ffff" stroke-width="1.5"/>
<path d="M141.2 314.9L126.5 311.7" stroke="#e80000" stroke-width="3.0"/><path d="M141.2 314.9L126.5 311.7" stroke="#ff2020" stroke-width="1.1"/>
<circle cx="156" cy="318.1" r="12.8" fill="url(#gS)"/>
<path d="M642.9 322.6L637 314.2" stroke="#bdbdbd"/><path d="M642.9 322.6L637 314.2" stroke="#e4e4e4" stroke-width="1.5"/>
<path d="M154.1 328.1L151.6 342.1" stroke="#00e6ee"/><path d="M154.1 328.1L151.6 342.1" stroke="#30ffff" stroke-width="1.5"/>
<path d="M153.2 310.7L149.4 300.4" stroke="#00e6ee"/><path d="M153.2 310.7L149.4 300.4" stroke="#30ffff" stroke-width="1.5"/>
<path d="M491.3 303.6L481.9 298.6" stroke="#e80000"/><path d="M491.3 303.6L481.9 298.6" stroke="#ff2020" stroke-width="1.5"/>
<polygon points="142.8,282.7 147.1,366.1 126.5,311.7" fill="rgb(0,139,139)" fill-opacity="0.6"/>
<polygon points="142.8,282.7 147.1,366.1 207.5,311.7" fill="rgb(0,229,229)" fill-opacity="0.6"/>
<path d="M151.6 342.1L147.1 366.1" stroke="#8e8888" stroke-width="2.8"/><path d="M151.6 342.1L147.1 366.1" stroke="#7cb0b0" stroke-width="1.1"/>
<path d="M149.4 300.4L142.8 282.7" stroke="#8e8888" stroke-width="2.8"/><path d="M149.4 300.4L142.8 282.7" stroke="#7cb0b0" stroke-width="1.1"/>
<circle cx="126.5" cy="311.7" r="4.4" fill="url(#gO)"/>
<circle cx="207.5" cy="311.7" r="4.4" fill="url(#gO)"/>
<polygon points="410.6,458.1 406.3,374.7 345.9,429.1" fill="rgb(0,112,112)" fill-opacity="0.6"/>
<polygon points="410.6,458.1 406.3,374.7 426.9,429.1" fill="rgb(0,202,202)" fill-opacity="0.6"/>
<path d="M397.4 422.7L404 440.4" stroke="#00e6ee"/><path d="M397.4 422.7L404 440.4" stroke="#30ffff" stroke-width="1.5"/>
<path d="M404 440.4L410.6 458.1" stroke="#e80000" stroke-width="3.0"/><path d="M404 440.4L410.6 458.1" stroke="#ff2020" stroke-width="1.1"/>
<path d="M397.4 422.7L401.8 398.7" stroke="#00e6ee"/><path d="M397.4 422.7L401.8 398.7" stroke="#30ffff" stroke-width="1.5"/>
<path d="M401.8 398.7L406.3 374.7" stroke="#e80000" stroke-width="3.0"/><path d="M401.8 398.7L406.3 374.7" stroke="#ff2020" stroke-width="1.1"/>
<circle cx="397.4" cy="422.7" r="12.8" fill="url(#gS)"/>
<circle cx="277.7" cy="151.6" r="4.4" fill="url(#gO)"/>
<path d="M386.7 424L371.7 425.9" stroke="#00e6ee"/><path d="M386.7 424L371.7 425.9" stroke="#30ffff" stroke-width="1.5"/>
<path d="M403.6 424L412.2 425.9" stroke="#00e6ee"/><path d="M403.6 424L412.2 425.9" stroke="#30ffff" stroke-width="1.5"/>
<path d="M713.7 407.6L730.2 404.5" stroke="#e80000"/><path d="M713.7 407.6L730.2 404.5" stroke="#ff2020" stroke-width="1.5"/>
<polygon points="406.3,374.7 426.9,429.1 345.9,429.1" fill="rgb(0,237,237)" fill-opacity="0.6"/>
<polygon points="410.6,458.1 426.9,429.1 345.9,429.1" fill="rgb(0,130,130)" fill-opacity="0.6"/>
<path d="M371.7 425.9L345.9 429.1" stroke="#8e8888" stroke-width="2.8"/><path d="M371.7 425.9L345.9 429.1" stroke="#7cb0b0" stroke-width="1.1"/>
<path d="M412.2 425.9L426.9 429.1" stroke="#8e8888" stroke-width="2.8"/><path d="M412.2 425.9L426.9 429.1" stroke="#7cb0b0" stroke-width="1.1"/>
<circle cx="410.6" cy="458.1" r="4.4" fill="url(#gO)"/>
<circle cx="406.3" cy="374.7" r="4.4" fill="url(#gO)"/>
<path d="M376.8 306.1L346.8 311.7" stroke="#e80000"/><path d="M376.8 306.1L346.8 311.7" stroke="#ff2020" stroke-width="1.5"/>
<circle cx="154.5" cy="509.6" r="4.4" fill="url(#gO)"/>
<circle cx="561.8" cy="298" r="4.4" fill="url(#gO)"/>
<path d="M476.5 537.4L443.5 538.5" stroke="#e80000"/><path d="M476.5 537.4L443.5 538.5" stroke="#ff2020" stroke-width="1.5"/>
<path d="M314.1 310.5L346.8 311.7" stroke="#e80000"/><path d="M314.1 310.5L346.8 311.7" stroke="#ff2020" stroke-width="1.5"/>
<circle cx="713.7" cy="407.6" r="4.4" fill="url(#gO)"/>
<path d="M713.7 407.6L721.8 409.3" stroke="#e80000"/><path d="M713.7 407.6L721.8 409.3" stroke="#ff2020" stroke-width="1.5"/>
<path d="M513.4 536.2L476.5 537.4" stroke="#bdbdbd"/><path d="M513.4 536.2L476.5 537.4" stroke="#e4e4e4" stroke-width="1.5"/>
<path d="M513.7 499.1L514 466" stroke="#e80000"/><path d="M513.7 499.1L514 466" stroke="#ff2020" stroke-width="1.5"/>
<path d="M513.4 536.2L513.7 499.1" stroke="#bdbdbd"/><path d="M513.4 536.2L513.7 499.1" stroke="#e4e4e4" stroke-width="1.5"/>
<circle cx="513.4" cy="536.2" r="16.3" fill="url(#gZ)"/>
<path d="M633.1 477.2L635.3 496.2" stroke="#bdbdbd"/><path d="M633.1 477.2L635.3 496.2" stroke="#e4e4e4" stroke-width="1.5"/>
<circle cx="514" cy="462" r="4.4" fill="url(#gO)"/>
<circle cx="194.9" cy="202.2" r="4.4" fill="url(#gO)"/>
<polygon points="502.3,235.1 562.7,180.7 481.7,180.7" fill="rgb(0,103,103)" fill-opacity="0.6"/>
<polygon points="498,151.6 562.7,180.7 481.7,180.7" fill="rgb(0,211,211)" fill-opacity="0.6"/>
<path d="M511.2 187L536.9 183.9" stroke="#00e6ee"/><path d="M511.2 187L536.9 183.9" stroke="#30ffff" stroke-width="1.5"/>
<path d="M536.9 183.9L562.7 180.7" stroke="#e80000" stroke-width="3.0"/><path d="M536.9 183.9L562.7 180.7" stroke="#ff2020" stroke-width="1.1"/>
<path d="M511.2 187L496.4 183.9" stroke="#00e6ee"/><path d="M511.2 187L496.4 183.9" stroke="#30ffff" stroke-width="1.5"/>
<path d="M496.4 183.9L481.7 180.7" stroke="#e80000" stroke-width="3.0"/><path d="M496.4 183.9L481.7 180.7" stroke="#ff2020" stroke-width="1.1"/>
<circle cx="511.2" cy="187" r="12.8" fill="url(#gS)"/>
<path d="M509.3 197.1L506.8 211.1" stroke="#00e6ee"/><path d="M509.3 197.1L506.8 211.1" stroke="#30ffff" stroke-width="1.5"/>
<path d="M508.4 179.6L504.6 169.3" stroke="#00e6ee"/><path d="M508.4 179.6L504.6 169.3" stroke="#30ffff" stroke-width="1.5"/>
<polygon points="498,151.6 502.3,235.1 481.7,180.7" fill="rgb(0,139,139)" fill-opacity="0.6"/>
<polygon points="498,151.6 502.3,235.1 562.7,180.7" fill="rgb(0,229,229)" fill-opacity="0.6"/>
<path d="M630.9 458.1L633.1 477.2" stroke="#e80000"/><path d="M630.9 458.1L633.1 477.2" stroke="#ff2020" stroke-width="1.5"/>
<path d="M506.8 211.1L502.3 235.1" stroke="#8e8888" stroke-width="2.8"/><path d="M506.8 211.1L502.3 235.1" stroke="#7cb0b0" stroke-width="1.1"/>
<path d="M504.6 169.3L498 151.6" stroke="#8e8888" stroke-width="2.8"/><path d="M504.6 169.3L498 151.6" stroke="#7cb0b0" stroke-width="1.1"/>
<circle cx="481.7" cy="180.7" r="4.4" fill="url(#gO)"/>
<circle cx="562.7" cy="180.7" r="4.4" fill="url(#gO)"/>
<path d="M417.3 306.1L427.8 311.7" stroke="#e80000"/><path d="M417.3 306.1L427.8 311.7" stroke="#ff2020" stroke-width="1.5"/>
<circle cx="345.9" cy="429.1" r="4.4" fill="url(#gO)"/>
<path d="M721.8 409.3L729.9 411.1" stroke="#00e6ee"/><path d="M721.8 409.3L729.9 411.1" stroke="#30ffff" stroke-width="1.5"/>
<polygon points="379.1,593 439.5,538.6 358.5,538.6" fill="rgb(0,103,103)" fill-opacity="0.6"/>
<polygon points="374.8,509.6 439.5,538.6 358.5,538.6" fill="rgb(0,211,211)" fill-opacity="0.6"/>
<path d="M388 545L413.7 541.8" stroke="#00e6ee"/><path d="M388 545L413.7 541.8" stroke="#30ffff" stroke-width="1.5"/>
<path d="M413.7 541.8L439.5 538.6" stroke="#e80000" stroke-width="3.0"/><path d="M413.7 541.8L439.5 538.6" stroke="#ff2020" stroke-width="1.1"/>
<path d="M388 545L373.2 541.8" stroke="#00e6ee"/><path d="M388 545L373.2 541.8" stroke="#30ffff" stroke-width="1.5"/>
<path d="M373.2 541.8L358.5 538.6" stroke="#e80000" stroke-width="3.0"/><path d="M373.2 541.8L358.5 538.6" stroke="#ff2020" stroke-width="1.1"/>
<circle cx="388" cy="545" r="12.8" fill="url(#gS)"/>
<path d="M386.1 555L383.6 569" stroke="#00e6ee"/><path d="M386.1 555L383.6 569" stroke="#30ffff" stroke-width="1.5"/>
<path d="M385.2 537.6L381.4 527.3" stroke="#00e6ee"/><path d="M385.2 537.6L381.4 527.3" stroke="#30ffff" stroke-width="1.5"/>
<polygon points="374.8,509.6 379.1,593 358.5,538.6" fill="rgb(0,139,139)" fill-opacity="0.6"/>
<polygon points="374.8,509.6 379.1,593 439.5,538.6" fill="rgb(0,229,229)" fill-opacity="0.6"/>
<path d="M383.6 569L379.1 593" stroke="#8e8888" stroke-width="2.8"/><path d="M383.6 569L379.1 593" stroke="#7cb0b0" stroke-width="1.1"/>
<path d="M381.4 527.3L374.8 509.6" stroke="#8e8888" stroke-width="2.8"/><path d="M381.4 527.3L374.8 509.6" stroke="#7cb0b0" stroke-width="1.1"/>
<circle cx="147.1" cy="366.1" r="4.4" fill="url(#gO)"/>
<circle cx="358.5" cy="538.6" r="4.4" fill="url(#gO)"/>
<circle cx="439.5" cy="538.6" r="4.4" fill="url(#gO)"/>
<circle cx="630.9" cy="458.1" r="4.4" fill="url(#gO)"/>
<circle cx="509.7" cy="378.5" r="4.4" fill="url(#gO)"/>
<path d="M630.9 458.1L627.3 448.4" stroke="#e80000"/><path d="M630.9 458.1L627.3 448.4" stroke="#ff2020" stroke-width="1.5"/>
<path d="M501.7 309.3L491.3 303.6" stroke="#bdbdbd"/><path d="M501.7 309.3L491.3 303.6" stroke="#e4e4e4" stroke-width="1.5"/>
<path d="M505.7 343.9L509.3 374.7" stroke="#e80000"/><path d="M505.7 343.9L509.3 374.7" stroke="#ff2020" stroke-width="1.5"/>
<polygon points="398.9,231.2 394.6,147.8 334.2,202.2" fill="rgb(0,112,112)" fill-opacity="0.6"/>
<polygon points="398.9,231.2 394.6,147.8 415.2,202.2" fill="rgb(0,202,202)" fill-opacity="0.6"/>
<path d="M385.7 195.8L392.3 213.5" stroke="#00e6ee"/><path d="M385.7 195.8L392.3 213.5" stroke="#30ffff" stroke-width="1.5"/>
<path d="M392.3 213.5L398.9 231.2" stroke="#e80000" stroke-width="3.0"/><path d="M392.3 213.5L398.9 231.2" stroke="#ff2020" stroke-width="1.1"/>
<path d="M385.7 195.8L390.1 171.8" stroke="#00e6ee"/><path d="M385.7 195.8L390.1 171.8" stroke="#30ffff" stroke-width="1.5"/>
<path d="M390.1 171.8L394.6 147.8" stroke="#e80000" stroke-width="3.0"/><path d="M390.1 171.8L394.6 147.8" stroke="#ff2020" stroke-width="1.1"/>
<circle cx="385.7" cy="195.8" r="12.8" fill="url(#gS)"/>
<path d="M375 197.1L360 199" stroke="#00e6ee"/><path d="M375 197.1L360 199" stroke="#30ffff" stroke-width="1.5"/>
<path d="M391.9 197.1L400.5 199" stroke="#00e6ee"/><path d="M391.9 197.1L400.5 199" stroke="#30ffff" stroke-width="1.5"/>
<polygon points="394.6,147.8 415.2,202.2 334.2,202.2" fill="rgb(0,237,237)" fill-opacity="0.6"/>
<polygon points="398.9,231.2 415.2,202.2 334.2,202.2" fill="rgb(0,130,130)" fill-opacity="0.6"/>
<path d="M360 199L334.2 202.2" stroke="#8e8888" stroke-width="2.8"/><path d="M360 199L334.2 202.2" stroke="#7cb0b0" stroke-width="1.1"/>
<path d="M400.5 199L415.2 202.2" stroke="#8e8888" stroke-width="2.8"/><path d="M400.5 199L415.2 202.2" stroke="#7cb0b0" stroke-width="1.1"/>
<circle cx="398.9" cy="231.2" r="4.4" fill="url(#gO)"/>
<circle cx="394.6" cy="147.8" r="4.4" fill="url(#gO)"/>
<path d="M626.7 354.3L626.9 333.9" stroke="#bdbdbd"/><path d="M626.7 354.3L626.9 333.9" stroke="#e4e4e4" stroke-width="1.5"/>
<path d="M626.6 374.7L626.7 354.3" stroke="#e80000"/><path d="M626.6 374.7L626.7 354.3" stroke="#ff2020" stroke-width="1.5"/>
<path d="M627.3 448.4L623.6 438.7" stroke="#00e6ee"/><path d="M627.3 448.4L623.6 438.7" stroke="#30ffff" stroke-width="1.5"/>
<circle cx="142.8" cy="282.7" r="4.4" fill="url(#gO)"/>
<path d="M626.6 374.7L624.1 387.9" stroke="#e80000"/><path d="M626.6 374.7L624.1 387.9" stroke="#ff2020" stroke-width="1.5"/>
<circle cx="626.6" cy="374.7" r="4.4" fill="url(#gO)"/>
<path d="M501.7 309.3L505.7 343.9" stroke="#bdbdbd"/><path d="M501.7 309.3L505.7 343.9" stroke="#e4e4e4" stroke-width="1.5"/>
<path d="M464.8 310.5L431.8 311.6" stroke="#e80000"/><path d="M464.8 310.5L431.8 311.6" stroke="#ff2020" stroke-width="1.5"/>
<path d="M501.7 309.3L464.8 310.5" stroke="#bdbdbd"/><path d="M501.7 309.3L464.8 310.5" stroke="#e4e4e4" stroke-width="1.5"/>
<path d="M502 272.2L502.3 239.1" stroke="#e80000"/><path d="M502 272.2L502.3 239.1" stroke="#ff2020" stroke-width="1.5"/>
<circle cx="426.9" cy="429.1" r="4.4" fill="url(#gO)"/>
<path d="M624.1 387.9L621.7 401.1" stroke="#00e6ee"/><path d="M624.1 387.9L621.7 401.1" stroke="#30ffff" stroke-width="1.5"/>
<path d="M501.7 309.3L502 272.2" stroke="#bdbdbd"/><path d="M501.7 309.3L502 272.2" stroke="#e4e4e4" stroke-width="1.5"/>
<circle cx="501.7" cy="309.3" r="16.3" fill="url(#gZ)"/>
<circle cx="502.3" cy="235.1" r="4.4" fill="url(#gO)"/>
<circle cx="379.1" cy="593" r="4.4" fill="url(#gO)"/>
<circle cx="334.2" cy="202.2" r="4.4" fill="url(#gO)"/>
<polygon points="367.4,366.1 427.8,311.7 346.8,311.7" fill="rgb(0,103,103)" fill-opacity="0.6"/>
<polygon points="363.1,282.7 427.8,311.7 346.8,311.7" fill="rgb(0,211,211)" fill-opacity="0.6"/>
<path d="M376.3 318.1L402 314.9" stroke="#00e6ee"/><path d="M376.3 318.1L402 314.9" stroke="#30ffff" stroke-width="1.5"/>
<path d="M402 314.9L427.8 311.7" stroke="#e80000" stroke-width="3.0"/><path d="M402 314.9L427.8 311.7" stroke="#ff2020" stroke-width="1.1"/>
<path d="M376.3 318.1L361.5 314.9" stroke="#00e6ee"/><path d="M376.3 318.1L361.5 314.9" stroke="#30ffff" stroke-width="1.5"/>
<path d="M361.5 314.9L346.8 311.7" stroke="#e80000" stroke-width="3.0"/><path d="M361.5 314.9L346.8 311.7" stroke="#ff2020" stroke-width="1.1"/>
<circle cx="376.3" cy="318.1" r="12.8" fill="url(#gS)"/>
<path d="M374.4 328.1L371.9 342.1" stroke="#00e6ee"/><path d="M374.4 328.1L371.9 342.1" stroke="#30ffff" stroke-width="1.5"/>
<path d="M373.5 310.7L369.7 300.4" stroke="#00e6ee"/><path d="M373.5 310.7L369.7 300.4" stroke="#30ffff" stroke-width="1.5"/>
<polygon points="363.1,282.7 367.4,366.1 346.8,311.7" fill="rgb(0,139,139)" fill-opacity="0.6"/>
<polygon points="363.1,282.7 367.4,366.1 427.8,311.7" fill="rgb(0,229,229)" fill-opacity="0.6"/>
<path d="M371.9 342.1L367.4 366.1" stroke="#8e8888" stroke-width="2.8"/><path d="M371.9 342.1L367.4 366.1" stroke="#7cb0b0" stroke-width="1.1"/>
<path d="M369.7 300.4L363.1 282.7" stroke="#8e8888" stroke-width="2.8"/><path d="M369.7 300.4L363.1 282.7" stroke="#7cb0b0" stroke-width="1.1"/>
<circle cx="346.8" cy="311.7" r="4.4" fill="url(#gO)"/>
<circle cx="427.8" cy="311.7" r="4.4" fill="url(#gO)"/>
<circle cx="498" cy="151.6" r="4.4" fill="url(#gO)"/>
<circle cx="374.8" cy="509.6" r="4.4" fill="url(#gO)"/>
<circle cx="415.2" cy="202.2" r="4.4" fill="url(#gO)"/>
<circle cx="367.4" cy="366.1" r="4.4" fill="url(#gO)"/>
<circle cx="363.1" cy="282.7" r="4.4" fill="url(#gO)"/>
<path d="M113 472.4L131.3 520.7M55.4 524.9L60.9 524.9M84.9 524.9L123.4 524.9M110 472.5L75 504.1M71.3 507.4L55.3 521.9M117.1 553.1L124.3 540.3M126.5 536.4L130.7 528.9M114.3 552.9L88.6 541.4M58.3 527.8L56 526.8M116.3 548L115.9 540M115.6 536L115.3 530M115.1 526L115 524M114.4 512L112.7 478.5M131.6 409.6L76.8 459M119.3 407.6L93.8 407.6M70.8 407.6L61.3 407.6M53.5 409.5L71.8 457.8M131.5 406.6L73.3 380.4M53.3 406.7L66.9 382.5M73.2 458L69.4 383M101.3 245.5L119.6 293.8M43.7 298L49.2 298M73.2 298L111.7 298M98.3 245.6L63.3 277.2M59.6 280.5L43.6 295M105.4 326.2L112.6 313.4M114.8 309.5L119 302M102.6 326L76.9 314.5M46.6 300.9L44.3 299.9M104.6 321.1L104.2 313.1M103.9 309.1L103.6 303.1M103.4 299.1L103.3 297.1M102.7 285.1L101 251.6M119.9 182.7L65.1 232.1M107.6 180.7L82.1 180.7M59.1 180.7L49.6 180.7M41.8 182.6L60.1 230.9M119.8 179.7L61.6 153.5M41.6 179.8L55.2 155.6M61.5 231.1L57.7 156.1M278.2 505.5L258 523.6M253.9 527.3L244.2 536M240.1 539.7L223.4 554.8M265.9 503.4L240.4 503.4M217.4 503.4L208.4 503.4M200.1 505.3L201.9 510M212.2 537.2L212.4 537.7M213.8 541.4L217.5 551.3M278.1 502.4L219.9 476.2M199.9 502.6L211.3 482.3M219.8 553.8L219.3 543.3M218.8 533.8L218.5 528.8M218.3 524.8L216 479.4M217 540.7L162.2 590M204.7 538.6L179.2 538.6M156.2 538.6L146.7 538.6M138.9 540.5L157.2 588.8M216.9 537.6L158.7 511.4M138.7 537.8L152.3 513.5M158.6 589L154.8 514.1M247.9 341.3L266.2 389.6M190.8 393.9L195.8 393.9M219.8 393.9L258.3 393.9M244.9 341.5L209.9 373M206.2 376.4L196.1 385.5M193.1 388.1L190.2 390.8M252 422L259.2 409.3M261.4 405.3L265.6 397.8M249.2 421.9L223.5 410.3M251.2 416.9L250.8 408.9M250.5 404.9L250.2 398.9M250 394.9L249.9 392.9M249.3 380.9L247.6 347.5M186.7 376.5L205 424.8M129.1 429.1L202.1 429.1M183.7 376.7L129 426M190.8 457.2L204.4 433M188 457.1L129.7 430.9M190 452.1L188.7 428.1M188.1 416.1L186.4 382.7M266.5 278.6L246.3 296.7M242.2 300.4L232.5 309.1M228.4 312.8L211.7 327.9M254.2 276.5L228.7 276.5M205.7 276.5L196.7 276.5M188.4 278.4L190.2 283.1M200.5 310.3L200.7 310.8M202.1 314.5L205.8 324.4M266.4 275.5L208.2 249.3M188.2 275.7L199.6 255.4M208.1 326.9L207.6 316.4M207.1 306.9L206.8 301.9M206.6 297.9L204.3 252.5M205.3 313.8L150.5 363.1M193 311.7L167.5 311.7M144.5 311.7L135 311.7M127.2 313.6L145.5 361.9M205.2 310.7L147 284.5M127 310.9L140.6 286.6M146.9 362.1L143.1 287.2M236.2 114.4L254.5 162.7M179.1 167L184.1 167M208.1 167L246.6 167M233.2 114.6L184.4 158.6M181.4 161.2L178.5 163.9M240.3 195.1L247.5 182.4M249.7 178.4L253.9 170.9M237.5 195L211.8 183.4M239.5 190L239.1 182M238.8 178L238.5 172M238.3 168L238.2 166M237.6 154L235.9 120.6M175 149.6L193.3 197.9M117.4 202.2L190.4 202.2M172 149.8L117.3 199.1M179.1 230.3L192.7 206.1M176.3 230.2L118 204M178.3 225.2L177 201.2M176.4 189.2L174.7 155.8M333.3 472.4L351.6 520.7M276.2 524.9L281.2 524.9M305.2 524.9L343.7 524.9M330.3 472.5L295.3 504.1M291.6 507.4L275.6 521.9M337.4 553.1L344.6 540.3M346.8 536.4L351 528.9M334.6 552.9L308.9 541.4M336.6 548L336.2 540M335.9 536L335.6 530M335.4 526L335.3 524M334.7 512L333 478.5M351.9 409.6L297.1 459M339.6 407.6L314.1 407.6M291.1 407.6L281.6 407.6M273.8 409.5L292.1 457.8M351.8 406.6L293.6 380.4M273.6 406.7L287.2 382.5M293.5 458L289.7 383M321.6 245.5L339.9 293.8M264.5 298L269.5 298M293.5 298L332 298M318.6 245.6L283.6 277.2M279.9 280.5L263.9 295M325.7 326.2L332.9 313.4M335.1 309.5L339.3 302M322.9 326L297.2 314.5M324.9 321.1L324.5 313.1M324.2 309.1L323.9 303.1M323.7 299.1L323.6 297.1M323 285.1L321.3 251.6M340.2 182.7L285.4 232.1M327.9 180.7L302.4 180.7M279.4 180.7L269.9 180.7M262.1 182.6L280.4 230.9M340.1 179.7L281.9 153.5M261.9 179.8L275.5 155.6M281.8 231.1L278 156.1M498.5 505.5L478.3 523.6M474.2 527.3L464.5 536M460.4 539.7L443.7 554.8M486.2 503.4L460.7 503.4M437.7 503.4L428.7 503.4M420.4 505.3L422.2 510M432.5 537.2L432.7 537.7M434.1 541.4L437.8 551.3M498.4 502.4L440.2 476.2M420.2 502.6L431.6 482.3M440.1 553.8L439.6 543.3M439.1 533.8L438.8 528.8M438.6 524.8L436.3 479.4M437.3 540.7L382.5 590M425 538.6L399.5 538.6M376.5 538.6L367 538.6M359.2 540.5L377.5 588.8M437.2 537.6L379 511.4M359 537.8L372.6 513.5M378.9 589L375.1 514.1M468.2 341.3L486.5 389.6M411.1 393.9L416.1 393.9M440.1 393.9L478.6 393.9M465.2 341.5L430.2 373M426.5 376.4L416.4 385.5M413.4 388.1L410.5 390.8M472.3 422L479.5 409.3M481.7 405.3L485.9 397.8M469.5 421.9L443.8 410.3M471.5 416.9L471.1 408.9M470.8 404.9L470.5 398.9M470.3 394.9L470.2 392.9M469.6 380.9L467.9 347.5M407 376.5L425.3 424.8M349.4 429.1L422.4 429.1M404 376.7L349.3 426M411.1 457.2L424.7 433M408.3 457.1L350 430.9M410.3 452.1L409 428.1M408.4 416.1L406.7 382.7M486.8 278.6L466.6 296.7M462.5 300.4L452.8 309.1M448.7 312.8L432 327.9M474.5 276.5L449 276.5M426 276.5L417 276.5M408.7 278.4L410.5 283.1M420.8 310.3L421 310.8M422.4 314.5L426.1 324.4M486.7 275.5L428.5 249.3M408.5 275.7L419.9 255.4M428.4 326.9L427.9 316.4M427.4 306.9L427.1 301.9M426.9 297.9L424.6 252.5M425.6 313.8L370.8 363.1M413.3 311.7L387.8 311.7M364.8 311.7L355.3 311.7M347.5 313.6L365.8 361.9M425.5 310.7L367.3 284.5M347.3 310.9L360.9 286.6M367.2 362.1L363.4 287.2M456.5 114.4L474.8 162.7M399.4 167L404.4 167M428.4 167L466.9 167M453.5 114.6L404.7 158.6M401.7 161.2L398.8 163.9M460.6 195.1L467.8 182.4M470 178.4L474.2 170.9M457.8 195L432.1 183.4M459.8 190L459.4 182M459.1 178L458.8 172M458.6 168L458.5 166M457.9 154L456.2 120.6M395.3 149.6L413.6 197.9M337.7 202.2L410.7 202.2M392.3 149.8L337.6 199.1M399.4 230.3L413 206.1M396.6 230.2L338.3 204M398.6 225.2L397.3 201.2M396.7 189.2L395 155.8M553.6 472.4L571.9 520.7M496.5 524.9L501.5 524.9M525.5 524.9L569 524.9M550.6 472.5L515.6 504.1M511.9 507.4L495.9 521.9M557.7 553.1L571.3 528.9M554.9 552.9L529.2 541.4M556.9 548L555.6 524M555 512L553.3 478.5M572.2 409.6L517.4 459M559.9 407.6L534.4 407.6M511.4 407.6L501.9 407.6M494.1 409.5L512.4 457.8M572.1 406.6L513.9 380.4M493.9 406.7L507.5 382.5M513.8 458L510 383M541.9 245.5L560.2 293.8M484.8 298L489.8 298M513.8 298L557.3 298M538.9 245.6L503.9 277.2M500.2 280.5L484.2 295M546 326.2L559.6 302M543.2 326L517.5 314.5M545.2 321.1L543.9 297.1M543.3 285.1L541.6 251.6M560.5 182.7L505.7 232.1M548.2 180.7L522.7 180.7M499.7 180.7L490.2 180.7M482.4 182.6L500.7 230.9M560.4 179.7L502.2 153.5M482.2 179.8L495.8 155.6M502.1 231.1L498.3 156.1M577.2 404.7L624.8 355.8M628.6 351.8L645.8 334.2M577.9 410.4L625.6 449.4M635.4 457.3L653.2 471.8M628.6 370.7L648.2 332.3M622.8 377.1L576.1 406.5M710.7 404.1L651.2 333.6M630.8 376.3L710.4 406.4M652 334.2L706.4 391.7M712 403.3L708.6 394.3M658.8 470.6L698.6 409M701.1 405.2L706.5 396.8M710.7 411L658 472.5M634.7 460.6L655.5 473.8M634.7 455.8L710.7 409.4M630.6 452.1L627 382.7M627.5 455.1L576.3 409.3" stroke="#2f6bff" stroke-width="1" shape-rendering="crispEdges"/>
<path d="M647.1 336.2L632.3 379.5M630.8 383.8L628.1 391.9M582.2 405.6L620.6 395.6M625 394.5L625.5 394.4M653.6 466.8L641.3 432.5M639.2 426.8L634.7 414.1M631 403.7L628.4 396.7M631.4 393.9L636.4 393.9M660.4 393.9L698.9 393.9" stroke="#2f6bff" stroke-width="1" stroke-dasharray="2 1.500" stroke-opacity="0.700"/>
<path d="M129.3 562.1L146.8 562.1M193.3 562.1L218.8 562.1M221.3 562.1L367.4 562.1M413.9 562.1L438.9 562.1M441.9 562.1L569.9 562.1M68.1 597.3L157.6 597.3M160.1 597.3L377.7 597.3M380.7 597.3L508.7 597.3M117.6 335.2L135.1 335.2M181.6 335.2L184.1 335.2M188.1 335.2L206.1 335.2M210.1 335.2L282.6 335.2M286.6 335.2L324.1 335.2M328.1 335.2L355.7 335.2M402.2 335.2L404.7 335.2M408.7 335.2L426.7 335.2M430.7 335.2L502.7 335.2M506.7 335.2L544.2 335.2M548.2 335.2L558.2 335.2M56.4 370.4L145.9 370.4M148.4 370.4L366 370.4M369 370.4L497 370.4M105.9 108.3L546.5 108.3M44.7 143.5L485.3 143.5M129.3 562.1L128.2 540.1M128 536.1L127.9 534.1M126.5 507.6L122.6 432.7M122.3 426.2L121.9 418.7M120 381.2L116.5 313.2M116.3 309.2L116.2 307.2M114.8 280.7L110.9 205.8M110.6 199.3L110.2 191.8M108.3 154.3L105.9 108.3M68.1 597.3L44.7 143.5M349.6 562.1L348.5 540.1M348.3 536.1L348.2 534.1M346.8 507.6L342.9 432.7M342.6 426.2L342.2 418.7M340.3 381.2L336.8 313.2M336.6 309.2L336.5 307.2M335.1 280.7L331.2 205.8M330.9 199.3L330.5 191.8M328.6 154.3L326.2 108.3M288.4 597.3L265 143.5M569.9 562.1L568.5 534.1M567.1 507.6L562.5 418.7M560.6 381.2L556.8 307.2M555.4 280.7L550.8 191.8M548.9 154.3L546.5 108.3M508.7 597.3L485.3 143.5M129.3 562.1L68.1 597.3M117.6 335.2L108.5 340.4M106.3 341.7L69.4 362.9M66.8 364.4L56.4 370.4M105.9 108.3L44.7 143.5M349.6 562.1L288.4 597.3M337.9 335.2L328.8 340.4M326.6 341.7L289.7 362.9M287.1 364.4L276.7 370.4M326.2 108.3L265 143.5M569.9 562.1L508.7 597.3M558.2 335.2L549.1 340.4M546.9 341.7L510 362.9M507.4 364.4L497 370.4M546.5 108.3L485.3 143.5" stroke="#fff" stroke-width="1" shape-rendering="crispEdges"/>
</g>
<g>
<path d="M51.300 89.300L50.500 62.900M51.300 89.300L76 88.700M51.300 89.300L45 92.700" stroke="#9a9a9a" stroke-width="1" fill="none"/>
<path d="M49.400 51.800L53.900 62.900L46.700 63z" fill="url(#gA)"/>
<path d="M88.200 88.300L76.100 92.400L76 84.700z" fill="url(#gB)"/>
<rect x="40.400" y="90.200" width="6.600" height="6.400" rx="1.500" fill="url(#gC)"/>
<text x="46.300" y="47" font-size="12.500" fill="#c8c8c8">b</text>
<text x="94.300" y="91" font-size="12.500" fill="#c8c8c8">a</text>
<text x="32.500" y="98.600" font-size="12.500" fill="#c8c8c8">c</text>
</g>
<g>
<rect x="792" y="609" width="31" height="68" fill="#000" stroke="#fff" stroke-width="2"/>
<clipPath id="lc"><rect x="793" y="610" width="29.300" height="66"/></clipPath>
<circle cx="802" cy="620" r="8.800" fill="url(#lZ)"/>
<circle cx="802" cy="643" r="8.800" fill="url(#lS)"/>
<circle cx="802" cy="666" r="8.800" fill="url(#lO)"/>
<g clip-path="url(#lc)" font-size="12.300" fill="#f4f4f4"><text x="810.600" y="623.800">Zr</text><text x="810.600" y="646.800">Si</text><text x="810.600" y="669.800">O</text></g>
</g>
</svg>
<div id="bar"><div class="line"></div><div class="wl"></div>
<div id="b1"><i style="left:3px;top:6px"></i><i style="left:9px;top:6px"></i><i style="left:3px;top:11px"></i><i style="left:9px;top:11px"></i></div>
<div id="tab"><span>Super cell with polyhedra</span></div><div id="tabr"></div>
<div id="grp"><div class="sep"></div>
<svg width="37" height="20" style="position:absolute;left:-1px;top:0"><rect x="5.5" y="5.5" width="13" height="10" fill="#f4f6fb" stroke="#3c5aa8"/><rect x="6" y="6" width="12" height="2.5" fill="#3d6ad6"/><path d="M6 3v7M2.500 6.500h7M3.500 4l5 5M8.500 4l-5 5" stroke="#f2e020" stroke-width="1.300"/><path d="M26.500 9h7l-3.500 3.500z" fill="#8a8a8a"/></svg></div>
<svg id="more" width="12" height="12"><path d="M0.500 2.500h3l3 3.500l-3 3.500h-3l3-3.500zM6 2.500h3l3 3.500l-3 3.500h-3l3-3.500z" fill="#777"/></svg>
</div>
</body></html>
